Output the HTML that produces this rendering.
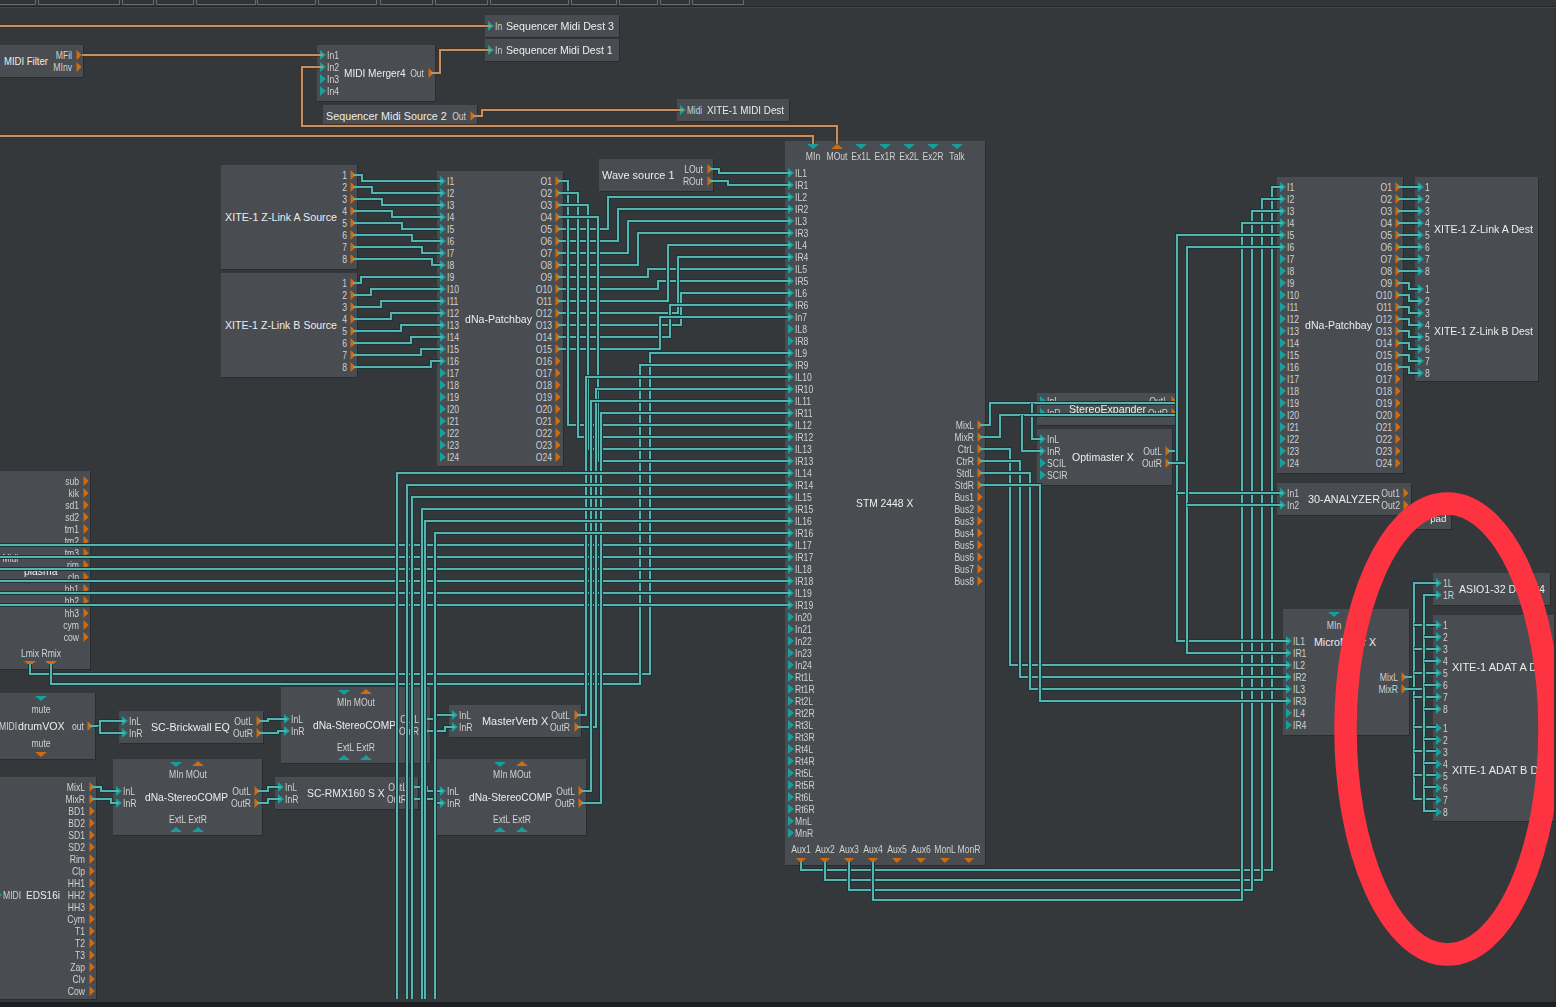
<!DOCTYPE html>
<html><head><meta charset="utf-8"><style>
html,body{margin:0;padding:0;background:#35383b;overflow:hidden;}
svg{display:block;font-family:"Liberation Sans",sans-serif;}
text{-webkit-font-smoothing:antialiased;}
</style></head><body>
<svg width="1556" height="1007" viewBox="0 0 1556 1007">
<rect x="0" y="0" width="1556" height="1007" fill="#35383b"/>
<rect x="0" y="0" width="1556" height="6" fill="#323538"/>
<path d="M0,4.5 H35.5 V0" fill="none" stroke="#6a6d70" stroke-width="1"/><path d="M38.5,0 V4.5 H119.5 V0" fill="none" stroke="#6a6d70" stroke-width="1"/><path d="M122.5,0 V4.5 H153.5 V0" fill="none" stroke="#6a6d70" stroke-width="1"/><path d="M156.5,0 V4.5 H193.5 V0" fill="none" stroke="#6a6d70" stroke-width="1"/><path d="M196.5,0 V4.5 H255.5 V0" fill="none" stroke="#6a6d70" stroke-width="1"/><path d="M257.5,0 V4.5 H315.5 V0" fill="none" stroke="#6a6d70" stroke-width="1"/><path d="M318.5,0 V4.5 H376.5 V0" fill="none" stroke="#6a6d70" stroke-width="1"/><path d="M380.5,0 V4.5 H432.5 V0" fill="none" stroke="#6a6d70" stroke-width="1"/><path d="M435.5,0 V4.5 H487.5 V0" fill="none" stroke="#6a6d70" stroke-width="1"/><path d="M490.5,0 V4.5 H568.5 V0" fill="none" stroke="#6a6d70" stroke-width="1"/><path d="M571.5,0 V4.5 H616.5 V0" fill="none" stroke="#6a6d70" stroke-width="1"/><path d="M619.5,0 V4.5 H657.5 V0" fill="none" stroke="#6a6d70" stroke-width="1"/><path d="M660.5,0 V4.5 H689.5 V0" fill="none" stroke="#6a6d70" stroke-width="1"/><path d="M692.5,0 V4.5 H743.5 V0" fill="none" stroke="#6a6d70" stroke-width="1"/>
<rect x="0" y="6" width="1556" height="1" fill="#232527"/>
<rect x="0" y="7" width="1556" height="1" fill="#44474a"/>
<g opacity="0.999">
<rect x="-4" y="46" width="88" height="32" fill="#2a2c2f" shape-rendering="crispEdges"/><rect x="-5" y="45" width="88" height="32" fill="#4a4d51" shape-rendering="crispEdges"/><text x="4" y="65" font-size="11" text-anchor="start" fill="#eeeeee" textLength="44" lengthAdjust="spacingAndGlyphs">MIDI Filter</text><text transform="translate(72,59) scale(0.82,1)" font-size="10.5" text-anchor="end" fill="#d2d2d2">MFil</text><polygon points="76.5,50 81.7,55 76.5,60" fill="#d06c12"/><text transform="translate(72,71) scale(0.82,1)" font-size="10.5" text-anchor="end" fill="#d2d2d2">MInv</text><polygon points="76.5,62 81.7,67 76.5,72" fill="#d06c12"/><rect x="486" y="16" width="134" height="22" fill="#2a2c2f" shape-rendering="crispEdges"/><rect x="485" y="15" width="134" height="22" fill="#4a4d51" shape-rendering="crispEdges"/><polygon points="488,21 494,26 488,31" fill="#1a9e9e"/><text transform="translate(495,30) scale(0.82,1)" font-size="10.5" text-anchor="start" fill="#d2d2d2">In</text><text x="506" y="30" font-size="11" text-anchor="start" fill="#eeeeee" textLength="108" lengthAdjust="spacingAndGlyphs">Sequencer Midi Dest 3</text><rect x="486" y="40" width="134" height="22" fill="#2a2c2f" shape-rendering="crispEdges"/><rect x="485" y="39" width="134" height="22" fill="#4a4d51" shape-rendering="crispEdges"/><polygon points="488,45 494,50 488,55" fill="#1a9e9e"/><text transform="translate(495,54) scale(0.82,1)" font-size="10.5" text-anchor="start" fill="#d2d2d2">In</text><text x="506" y="54" font-size="11" text-anchor="start" fill="#eeeeee" textLength="106.7" lengthAdjust="spacingAndGlyphs">Sequencer Midi Dest 1</text><rect x="318" y="46" width="118" height="56" fill="#2a2c2f" shape-rendering="crispEdges"/><rect x="317" y="45" width="118" height="56" fill="#4a4d51" shape-rendering="crispEdges"/><polygon points="320,50 326,55 320,60" fill="#1a9e9e"/><text transform="translate(327,59) scale(0.82,1)" font-size="10.5" text-anchor="start" fill="#d2d2d2">In1</text><polygon points="320,62 326,67 320,72" fill="#1a9e9e"/><text transform="translate(327,71) scale(0.82,1)" font-size="10.5" text-anchor="start" fill="#d2d2d2">In2</text><polygon points="320,74 326,79 320,84" fill="#1a9e9e"/><text transform="translate(327,83) scale(0.82,1)" font-size="10.5" text-anchor="start" fill="#d2d2d2">In3</text><polygon points="320,86 326,91 320,96" fill="#1a9e9e"/><text transform="translate(327,95) scale(0.82,1)" font-size="10.5" text-anchor="start" fill="#d2d2d2">In4</text><text x="344" y="77" font-size="11" text-anchor="start" fill="#eeeeee" textLength="61.7" lengthAdjust="spacingAndGlyphs">MIDI Merger4</text><text transform="translate(424,77) scale(0.82,1)" font-size="10.5" text-anchor="end" fill="#d2d2d2">Out</text><polygon points="428.5,68 433.7,73 428.5,78" fill="#d06c12"/><rect x="324" y="106" width="154" height="20" fill="#2a2c2f" shape-rendering="crispEdges"/><rect x="323" y="105" width="154" height="20" fill="#4a4d51" shape-rendering="crispEdges"/><text x="326" y="120" font-size="11" text-anchor="start" fill="#eeeeee" textLength="120.8" lengthAdjust="spacingAndGlyphs">Sequencer Midi Source 2</text><text transform="translate(466,120) scale(0.82,1)" font-size="10.5" text-anchor="end" fill="#d2d2d2">Out</text><polygon points="470.5,111 475.7,116 470.5,121" fill="#d06c12"/><rect x="678" y="100" width="112" height="22" fill="#2a2c2f" shape-rendering="crispEdges"/><rect x="677" y="99" width="112" height="22" fill="#4a4d51" shape-rendering="crispEdges"/><polygon points="680,105 686,110 680,115" fill="#1a9e9e"/><text transform="translate(687,114) scale(0.82,1)" font-size="10" text-anchor="start" fill="#d2d2d2">Midi</text><text x="707" y="114" font-size="11" text-anchor="start" fill="#eeeeee" textLength="77" lengthAdjust="spacingAndGlyphs">XITE-1 MIDI Dest</text><rect x="600" y="160" width="114" height="32" fill="#2a2c2f" shape-rendering="crispEdges"/><rect x="599" y="159" width="114" height="32" fill="#4a4d51" shape-rendering="crispEdges"/><text x="602" y="179" font-size="11" text-anchor="start" fill="#eeeeee" textLength="72.6" lengthAdjust="spacingAndGlyphs">Wave source 1</text><text transform="translate(703,173) scale(0.82,1)" font-size="10.5" text-anchor="end" fill="#d2d2d2">LOut</text><polygon points="707.5,164 712.7,169 707.5,174" fill="#d06c12"/><text transform="translate(703,185) scale(0.82,1)" font-size="10.5" text-anchor="end" fill="#d2d2d2">ROut</text><polygon points="707.5,176 712.7,181 707.5,186" fill="#d06c12"/><rect x="222" y="166" width="136" height="104" fill="#2a2c2f" shape-rendering="crispEdges"/><rect x="221" y="165" width="136" height="104" fill="#4a4d51" shape-rendering="crispEdges"/><text x="225" y="221" font-size="11" text-anchor="start" fill="#eeeeee" textLength="112" lengthAdjust="spacingAndGlyphs">XITE-1  Z-Link A Source</text><text transform="translate(347,179) scale(0.82,1)" font-size="10.5" text-anchor="end" fill="#d2d2d2">1</text><polygon points="350.5,170 355.7,175 350.5,180" fill="#d06c12"/><text transform="translate(347,191) scale(0.82,1)" font-size="10.5" text-anchor="end" fill="#d2d2d2">2</text><polygon points="350.5,182 355.7,187 350.5,192" fill="#d06c12"/><text transform="translate(347,203) scale(0.82,1)" font-size="10.5" text-anchor="end" fill="#d2d2d2">3</text><polygon points="350.5,194 355.7,199 350.5,204" fill="#d06c12"/><text transform="translate(347,215) scale(0.82,1)" font-size="10.5" text-anchor="end" fill="#d2d2d2">4</text><polygon points="350.5,206 355.7,211 350.5,216" fill="#d06c12"/><text transform="translate(347,227) scale(0.82,1)" font-size="10.5" text-anchor="end" fill="#d2d2d2">5</text><polygon points="350.5,218 355.7,223 350.5,228" fill="#d06c12"/><text transform="translate(347,239) scale(0.82,1)" font-size="10.5" text-anchor="end" fill="#d2d2d2">6</text><polygon points="350.5,230 355.7,235 350.5,240" fill="#d06c12"/><text transform="translate(347,251) scale(0.82,1)" font-size="10.5" text-anchor="end" fill="#d2d2d2">7</text><polygon points="350.5,242 355.7,247 350.5,252" fill="#d06c12"/><text transform="translate(347,263) scale(0.82,1)" font-size="10.5" text-anchor="end" fill="#d2d2d2">8</text><polygon points="350.5,254 355.7,259 350.5,264" fill="#d06c12"/><rect x="222" y="274" width="136" height="104" fill="#2a2c2f" shape-rendering="crispEdges"/><rect x="221" y="273" width="136" height="104" fill="#4a4d51" shape-rendering="crispEdges"/><text x="225" y="329" font-size="11" text-anchor="start" fill="#eeeeee" textLength="112" lengthAdjust="spacingAndGlyphs">XITE-1  Z-Link B Source</text><text transform="translate(347,287) scale(0.82,1)" font-size="10.5" text-anchor="end" fill="#d2d2d2">1</text><polygon points="350.5,278 355.7,283 350.5,288" fill="#d06c12"/><text transform="translate(347,299) scale(0.82,1)" font-size="10.5" text-anchor="end" fill="#d2d2d2">2</text><polygon points="350.5,290 355.7,295 350.5,300" fill="#d06c12"/><text transform="translate(347,311) scale(0.82,1)" font-size="10.5" text-anchor="end" fill="#d2d2d2">3</text><polygon points="350.5,302 355.7,307 350.5,312" fill="#d06c12"/><text transform="translate(347,323) scale(0.82,1)" font-size="10.5" text-anchor="end" fill="#d2d2d2">4</text><polygon points="350.5,314 355.7,319 350.5,324" fill="#d06c12"/><text transform="translate(347,335) scale(0.82,1)" font-size="10.5" text-anchor="end" fill="#d2d2d2">5</text><polygon points="350.5,326 355.7,331 350.5,336" fill="#d06c12"/><text transform="translate(347,347) scale(0.82,1)" font-size="10.5" text-anchor="end" fill="#d2d2d2">6</text><polygon points="350.5,338 355.7,343 350.5,348" fill="#d06c12"/><text transform="translate(347,359) scale(0.82,1)" font-size="10.5" text-anchor="end" fill="#d2d2d2">7</text><polygon points="350.5,350 355.7,355 350.5,360" fill="#d06c12"/><text transform="translate(347,371) scale(0.82,1)" font-size="10.5" text-anchor="end" fill="#d2d2d2">8</text><polygon points="350.5,362 355.7,367 350.5,372" fill="#d06c12"/><rect x="438" y="172" width="126" height="295" fill="#2a2c2f" shape-rendering="crispEdges"/><rect x="437" y="171" width="126" height="295" fill="#4a4d51" shape-rendering="crispEdges"/><polygon points="440,176 446,181 440,186" fill="#1a9e9e"/><text transform="translate(447,185) scale(0.82,1)" font-size="10.5" text-anchor="start" fill="#d2d2d2">I1</text><text transform="translate(552,185) scale(0.82,1)" font-size="10.5" text-anchor="end" fill="#d2d2d2">O1</text><polygon points="555.5,176 560.7,181 555.5,186" fill="#d06c12"/><polygon points="440,188 446,193 440,198" fill="#1a9e9e"/><text transform="translate(447,197) scale(0.82,1)" font-size="10.5" text-anchor="start" fill="#d2d2d2">I2</text><text transform="translate(552,197) scale(0.82,1)" font-size="10.5" text-anchor="end" fill="#d2d2d2">O2</text><polygon points="555.5,188 560.7,193 555.5,198" fill="#d06c12"/><polygon points="440,200 446,205 440,210" fill="#1a9e9e"/><text transform="translate(447,209) scale(0.82,1)" font-size="10.5" text-anchor="start" fill="#d2d2d2">I3</text><text transform="translate(552,209) scale(0.82,1)" font-size="10.5" text-anchor="end" fill="#d2d2d2">O3</text><polygon points="555.5,200 560.7,205 555.5,210" fill="#d06c12"/><polygon points="440,212 446,217 440,222" fill="#1a9e9e"/><text transform="translate(447,221) scale(0.82,1)" font-size="10.5" text-anchor="start" fill="#d2d2d2">I4</text><text transform="translate(552,221) scale(0.82,1)" font-size="10.5" text-anchor="end" fill="#d2d2d2">O4</text><polygon points="555.5,212 560.7,217 555.5,222" fill="#d06c12"/><polygon points="440,224 446,229 440,234" fill="#1a9e9e"/><text transform="translate(447,233) scale(0.82,1)" font-size="10.5" text-anchor="start" fill="#d2d2d2">I5</text><text transform="translate(552,233) scale(0.82,1)" font-size="10.5" text-anchor="end" fill="#d2d2d2">O5</text><polygon points="555.5,224 560.7,229 555.5,234" fill="#d06c12"/><polygon points="440,236 446,241 440,246" fill="#1a9e9e"/><text transform="translate(447,245) scale(0.82,1)" font-size="10.5" text-anchor="start" fill="#d2d2d2">I6</text><text transform="translate(552,245) scale(0.82,1)" font-size="10.5" text-anchor="end" fill="#d2d2d2">O6</text><polygon points="555.5,236 560.7,241 555.5,246" fill="#d06c12"/><polygon points="440,248 446,253 440,258" fill="#1a9e9e"/><text transform="translate(447,257) scale(0.82,1)" font-size="10.5" text-anchor="start" fill="#d2d2d2">I7</text><text transform="translate(552,257) scale(0.82,1)" font-size="10.5" text-anchor="end" fill="#d2d2d2">O7</text><polygon points="555.5,248 560.7,253 555.5,258" fill="#d06c12"/><polygon points="440,260 446,265 440,270" fill="#1a9e9e"/><text transform="translate(447,269) scale(0.82,1)" font-size="10.5" text-anchor="start" fill="#d2d2d2">I8</text><text transform="translate(552,269) scale(0.82,1)" font-size="10.5" text-anchor="end" fill="#d2d2d2">O8</text><polygon points="555.5,260 560.7,265 555.5,270" fill="#d06c12"/><polygon points="440,272 446,277 440,282" fill="#1a9e9e"/><text transform="translate(447,281) scale(0.82,1)" font-size="10.5" text-anchor="start" fill="#d2d2d2">I9</text><text transform="translate(552,281) scale(0.82,1)" font-size="10.5" text-anchor="end" fill="#d2d2d2">O9</text><polygon points="555.5,272 560.7,277 555.5,282" fill="#d06c12"/><polygon points="440,284 446,289 440,294" fill="#1a9e9e"/><text transform="translate(447,293) scale(0.82,1)" font-size="10.5" text-anchor="start" fill="#d2d2d2">I10</text><text transform="translate(552,293) scale(0.82,1)" font-size="10.5" text-anchor="end" fill="#d2d2d2">O10</text><polygon points="555.5,284 560.7,289 555.5,294" fill="#d06c12"/><polygon points="440,296 446,301 440,306" fill="#1a9e9e"/><text transform="translate(447,305) scale(0.82,1)" font-size="10.5" text-anchor="start" fill="#d2d2d2">I11</text><text transform="translate(552,305) scale(0.82,1)" font-size="10.5" text-anchor="end" fill="#d2d2d2">O11</text><polygon points="555.5,296 560.7,301 555.5,306" fill="#d06c12"/><polygon points="440,308 446,313 440,318" fill="#1a9e9e"/><text transform="translate(447,317) scale(0.82,1)" font-size="10.5" text-anchor="start" fill="#d2d2d2">I12</text><text transform="translate(552,317) scale(0.82,1)" font-size="10.5" text-anchor="end" fill="#d2d2d2">O12</text><polygon points="555.5,308 560.7,313 555.5,318" fill="#d06c12"/><polygon points="440,320 446,325 440,330" fill="#1a9e9e"/><text transform="translate(447,329) scale(0.82,1)" font-size="10.5" text-anchor="start" fill="#d2d2d2">I13</text><text transform="translate(552,329) scale(0.82,1)" font-size="10.5" text-anchor="end" fill="#d2d2d2">O13</text><polygon points="555.5,320 560.7,325 555.5,330" fill="#d06c12"/><polygon points="440,332 446,337 440,342" fill="#1a9e9e"/><text transform="translate(447,341) scale(0.82,1)" font-size="10.5" text-anchor="start" fill="#d2d2d2">I14</text><text transform="translate(552,341) scale(0.82,1)" font-size="10.5" text-anchor="end" fill="#d2d2d2">O14</text><polygon points="555.5,332 560.7,337 555.5,342" fill="#d06c12"/><polygon points="440,344 446,349 440,354" fill="#1a9e9e"/><text transform="translate(447,353) scale(0.82,1)" font-size="10.5" text-anchor="start" fill="#d2d2d2">I15</text><text transform="translate(552,353) scale(0.82,1)" font-size="10.5" text-anchor="end" fill="#d2d2d2">O15</text><polygon points="555.5,344 560.7,349 555.5,354" fill="#d06c12"/><polygon points="440,356 446,361 440,366" fill="#1a9e9e"/><text transform="translate(447,365) scale(0.82,1)" font-size="10.5" text-anchor="start" fill="#d2d2d2">I16</text><text transform="translate(552,365) scale(0.82,1)" font-size="10.5" text-anchor="end" fill="#d2d2d2">O16</text><polygon points="555.5,356 560.7,361 555.5,366" fill="#d06c12"/><polygon points="440,368 446,373 440,378" fill="#1a9e9e"/><text transform="translate(447,377) scale(0.82,1)" font-size="10.5" text-anchor="start" fill="#d2d2d2">I17</text><text transform="translate(552,377) scale(0.82,1)" font-size="10.5" text-anchor="end" fill="#d2d2d2">O17</text><polygon points="555.5,368 560.7,373 555.5,378" fill="#d06c12"/><polygon points="440,380 446,385 440,390" fill="#1a9e9e"/><text transform="translate(447,389) scale(0.82,1)" font-size="10.5" text-anchor="start" fill="#d2d2d2">I18</text><text transform="translate(552,389) scale(0.82,1)" font-size="10.5" text-anchor="end" fill="#d2d2d2">O18</text><polygon points="555.5,380 560.7,385 555.5,390" fill="#d06c12"/><polygon points="440,392 446,397 440,402" fill="#1a9e9e"/><text transform="translate(447,401) scale(0.82,1)" font-size="10.5" text-anchor="start" fill="#d2d2d2">I19</text><text transform="translate(552,401) scale(0.82,1)" font-size="10.5" text-anchor="end" fill="#d2d2d2">O19</text><polygon points="555.5,392 560.7,397 555.5,402" fill="#d06c12"/><polygon points="440,404 446,409 440,414" fill="#1a9e9e"/><text transform="translate(447,413) scale(0.82,1)" font-size="10.5" text-anchor="start" fill="#d2d2d2">I20</text><text transform="translate(552,413) scale(0.82,1)" font-size="10.5" text-anchor="end" fill="#d2d2d2">O20</text><polygon points="555.5,404 560.7,409 555.5,414" fill="#d06c12"/><polygon points="440,416 446,421 440,426" fill="#1a9e9e"/><text transform="translate(447,425) scale(0.82,1)" font-size="10.5" text-anchor="start" fill="#d2d2d2">I21</text><text transform="translate(552,425) scale(0.82,1)" font-size="10.5" text-anchor="end" fill="#d2d2d2">O21</text><polygon points="555.5,416 560.7,421 555.5,426" fill="#d06c12"/><polygon points="440,428 446,433 440,438" fill="#1a9e9e"/><text transform="translate(447,437) scale(0.82,1)" font-size="10.5" text-anchor="start" fill="#d2d2d2">I22</text><text transform="translate(552,437) scale(0.82,1)" font-size="10.5" text-anchor="end" fill="#d2d2d2">O22</text><polygon points="555.5,428 560.7,433 555.5,438" fill="#d06c12"/><polygon points="440,440 446,445 440,450" fill="#1a9e9e"/><text transform="translate(447,449) scale(0.82,1)" font-size="10.5" text-anchor="start" fill="#d2d2d2">I23</text><text transform="translate(552,449) scale(0.82,1)" font-size="10.5" text-anchor="end" fill="#d2d2d2">O23</text><polygon points="555.5,440 560.7,445 555.5,450" fill="#d06c12"/><polygon points="440,452 446,457 440,462" fill="#1a9e9e"/><text transform="translate(447,461) scale(0.82,1)" font-size="10.5" text-anchor="start" fill="#d2d2d2">I24</text><text transform="translate(552,461) scale(0.82,1)" font-size="10.5" text-anchor="end" fill="#d2d2d2">O24</text><polygon points="555.5,452 560.7,457 555.5,462" fill="#d06c12"/><text x="465" y="323" font-size="11" text-anchor="start" fill="#eeeeee" textLength="67" lengthAdjust="spacingAndGlyphs">dNa-Patchbay</text><rect x="786" y="142" width="200" height="724" fill="#2a2c2f" shape-rendering="crispEdges"/><rect x="785" y="141" width="200" height="724" fill="#4a4d51" shape-rendering="crispEdges"/><polygon points="807,144 819,144 813,149" fill="#1a9e9e"/><text transform="translate(813,160) scale(0.82,1)" font-size="10.5" text-anchor="middle" fill="#d2d2d2">MIn</text><polygon points="831,149 843,149 837,144" fill="#d06c12"/><text transform="translate(837,160) scale(0.82,1)" font-size="10.5" text-anchor="middle" fill="#d2d2d2">MOut</text><polygon points="855,144 867,144 861,149" fill="#1a9e9e"/><text transform="translate(861,160) scale(0.82,1)" font-size="10.5" text-anchor="middle" fill="#d2d2d2">Ex1L</text><polygon points="879,144 891,144 885,149" fill="#1a9e9e"/><text transform="translate(885,160) scale(0.82,1)" font-size="10.5" text-anchor="middle" fill="#d2d2d2">Ex1R</text><polygon points="903,144 915,144 909,149" fill="#1a9e9e"/><text transform="translate(909,160) scale(0.82,1)" font-size="10.5" text-anchor="middle" fill="#d2d2d2">Ex2L</text><polygon points="927,144 939,144 933,149" fill="#1a9e9e"/><text transform="translate(933,160) scale(0.82,1)" font-size="10.5" text-anchor="middle" fill="#d2d2d2">Ex2R</text><polygon points="951,144 963,144 957,149" fill="#1a9e9e"/><text transform="translate(957,160) scale(0.82,1)" font-size="10.5" text-anchor="middle" fill="#d2d2d2">Talk</text><polygon points="788,168 794,173 788,178" fill="#1a9e9e"/><text transform="translate(795,177) scale(0.82,1)" font-size="10.5" text-anchor="start" fill="#d2d2d2">IL1</text><polygon points="788,180 794,185 788,190" fill="#1a9e9e"/><text transform="translate(795,189) scale(0.82,1)" font-size="10.5" text-anchor="start" fill="#d2d2d2">IR1</text><polygon points="788,192 794,197 788,202" fill="#1a9e9e"/><text transform="translate(795,201) scale(0.82,1)" font-size="10.5" text-anchor="start" fill="#d2d2d2">IL2</text><polygon points="788,204 794,209 788,214" fill="#1a9e9e"/><text transform="translate(795,213) scale(0.82,1)" font-size="10.5" text-anchor="start" fill="#d2d2d2">IR2</text><polygon points="788,216 794,221 788,226" fill="#1a9e9e"/><text transform="translate(795,225) scale(0.82,1)" font-size="10.5" text-anchor="start" fill="#d2d2d2">IL3</text><polygon points="788,228 794,233 788,238" fill="#1a9e9e"/><text transform="translate(795,237) scale(0.82,1)" font-size="10.5" text-anchor="start" fill="#d2d2d2">IR3</text><polygon points="788,240 794,245 788,250" fill="#1a9e9e"/><text transform="translate(795,249) scale(0.82,1)" font-size="10.5" text-anchor="start" fill="#d2d2d2">IL4</text><polygon points="788,252 794,257 788,262" fill="#1a9e9e"/><text transform="translate(795,261) scale(0.82,1)" font-size="10.5" text-anchor="start" fill="#d2d2d2">IR4</text><polygon points="788,264 794,269 788,274" fill="#1a9e9e"/><text transform="translate(795,273) scale(0.82,1)" font-size="10.5" text-anchor="start" fill="#d2d2d2">IL5</text><polygon points="788,276 794,281 788,286" fill="#1a9e9e"/><text transform="translate(795,285) scale(0.82,1)" font-size="10.5" text-anchor="start" fill="#d2d2d2">IR5</text><polygon points="788,288 794,293 788,298" fill="#1a9e9e"/><text transform="translate(795,297) scale(0.82,1)" font-size="10.5" text-anchor="start" fill="#d2d2d2">IL6</text><polygon points="788,300 794,305 788,310" fill="#1a9e9e"/><text transform="translate(795,309) scale(0.82,1)" font-size="10.5" text-anchor="start" fill="#d2d2d2">IR6</text><polygon points="788,312 794,317 788,322" fill="#1a9e9e"/><text transform="translate(795,321) scale(0.82,1)" font-size="10.5" text-anchor="start" fill="#d2d2d2">In7</text><polygon points="788,324 794,329 788,334" fill="#1a9e9e"/><text transform="translate(795,333) scale(0.82,1)" font-size="10.5" text-anchor="start" fill="#d2d2d2">IL8</text><polygon points="788,336 794,341 788,346" fill="#1a9e9e"/><text transform="translate(795,345) scale(0.82,1)" font-size="10.5" text-anchor="start" fill="#d2d2d2">IR8</text><polygon points="788,348 794,353 788,358" fill="#1a9e9e"/><text transform="translate(795,357) scale(0.82,1)" font-size="10.5" text-anchor="start" fill="#d2d2d2">IL9</text><polygon points="788,360 794,365 788,370" fill="#1a9e9e"/><text transform="translate(795,369) scale(0.82,1)" font-size="10.5" text-anchor="start" fill="#d2d2d2">IR9</text><polygon points="788,372 794,377 788,382" fill="#1a9e9e"/><text transform="translate(795,381) scale(0.82,1)" font-size="10.5" text-anchor="start" fill="#d2d2d2">IL10</text><polygon points="788,384 794,389 788,394" fill="#1a9e9e"/><text transform="translate(795,393) scale(0.82,1)" font-size="10.5" text-anchor="start" fill="#d2d2d2">IR10</text><polygon points="788,396 794,401 788,406" fill="#1a9e9e"/><text transform="translate(795,405) scale(0.82,1)" font-size="10.5" text-anchor="start" fill="#d2d2d2">IL11</text><polygon points="788,408 794,413 788,418" fill="#1a9e9e"/><text transform="translate(795,417) scale(0.82,1)" font-size="10.5" text-anchor="start" fill="#d2d2d2">IR11</text><polygon points="788,420 794,425 788,430" fill="#1a9e9e"/><text transform="translate(795,429) scale(0.82,1)" font-size="10.5" text-anchor="start" fill="#d2d2d2">IL12</text><polygon points="788,432 794,437 788,442" fill="#1a9e9e"/><text transform="translate(795,441) scale(0.82,1)" font-size="10.5" text-anchor="start" fill="#d2d2d2">IR12</text><polygon points="788,444 794,449 788,454" fill="#1a9e9e"/><text transform="translate(795,453) scale(0.82,1)" font-size="10.5" text-anchor="start" fill="#d2d2d2">IL13</text><polygon points="788,456 794,461 788,466" fill="#1a9e9e"/><text transform="translate(795,465) scale(0.82,1)" font-size="10.5" text-anchor="start" fill="#d2d2d2">IR13</text><polygon points="788,468 794,473 788,478" fill="#1a9e9e"/><text transform="translate(795,477) scale(0.82,1)" font-size="10.5" text-anchor="start" fill="#d2d2d2">IL14</text><polygon points="788,480 794,485 788,490" fill="#1a9e9e"/><text transform="translate(795,489) scale(0.82,1)" font-size="10.5" text-anchor="start" fill="#d2d2d2">IR14</text><polygon points="788,492 794,497 788,502" fill="#1a9e9e"/><text transform="translate(795,501) scale(0.82,1)" font-size="10.5" text-anchor="start" fill="#d2d2d2">IL15</text><polygon points="788,504 794,509 788,514" fill="#1a9e9e"/><text transform="translate(795,513) scale(0.82,1)" font-size="10.5" text-anchor="start" fill="#d2d2d2">IR15</text><polygon points="788,516 794,521 788,526" fill="#1a9e9e"/><text transform="translate(795,525) scale(0.82,1)" font-size="10.5" text-anchor="start" fill="#d2d2d2">IL16</text><polygon points="788,528 794,533 788,538" fill="#1a9e9e"/><text transform="translate(795,537) scale(0.82,1)" font-size="10.5" text-anchor="start" fill="#d2d2d2">IR16</text><polygon points="788,540 794,545 788,550" fill="#1a9e9e"/><text transform="translate(795,549) scale(0.82,1)" font-size="10.5" text-anchor="start" fill="#d2d2d2">IL17</text><polygon points="788,552 794,557 788,562" fill="#1a9e9e"/><text transform="translate(795,561) scale(0.82,1)" font-size="10.5" text-anchor="start" fill="#d2d2d2">IR17</text><polygon points="788,564 794,569 788,574" fill="#1a9e9e"/><text transform="translate(795,573) scale(0.82,1)" font-size="10.5" text-anchor="start" fill="#d2d2d2">IL18</text><polygon points="788,576 794,581 788,586" fill="#1a9e9e"/><text transform="translate(795,585) scale(0.82,1)" font-size="10.5" text-anchor="start" fill="#d2d2d2">IR18</text><polygon points="788,588 794,593 788,598" fill="#1a9e9e"/><text transform="translate(795,597) scale(0.82,1)" font-size="10.5" text-anchor="start" fill="#d2d2d2">IL19</text><polygon points="788,600 794,605 788,610" fill="#1a9e9e"/><text transform="translate(795,609) scale(0.82,1)" font-size="10.5" text-anchor="start" fill="#d2d2d2">IR19</text><polygon points="788,612 794,617 788,622" fill="#1a9e9e"/><text transform="translate(795,621) scale(0.82,1)" font-size="10.5" text-anchor="start" fill="#d2d2d2">In20</text><polygon points="788,624 794,629 788,634" fill="#1a9e9e"/><text transform="translate(795,633) scale(0.82,1)" font-size="10.5" text-anchor="start" fill="#d2d2d2">In21</text><polygon points="788,636 794,641 788,646" fill="#1a9e9e"/><text transform="translate(795,645) scale(0.82,1)" font-size="10.5" text-anchor="start" fill="#d2d2d2">In22</text><polygon points="788,648 794,653 788,658" fill="#1a9e9e"/><text transform="translate(795,657) scale(0.82,1)" font-size="10.5" text-anchor="start" fill="#d2d2d2">In23</text><polygon points="788,660 794,665 788,670" fill="#1a9e9e"/><text transform="translate(795,669) scale(0.82,1)" font-size="10.5" text-anchor="start" fill="#d2d2d2">In24</text><polygon points="788,672 794,677 788,682" fill="#1a9e9e"/><text transform="translate(795,681) scale(0.82,1)" font-size="10.5" text-anchor="start" fill="#d2d2d2">Rt1L</text><polygon points="788,684 794,689 788,694" fill="#1a9e9e"/><text transform="translate(795,693) scale(0.82,1)" font-size="10.5" text-anchor="start" fill="#d2d2d2">Rt1R</text><polygon points="788,696 794,701 788,706" fill="#1a9e9e"/><text transform="translate(795,705) scale(0.82,1)" font-size="10.5" text-anchor="start" fill="#d2d2d2">Rt2L</text><polygon points="788,708 794,713 788,718" fill="#1a9e9e"/><text transform="translate(795,717) scale(0.82,1)" font-size="10.5" text-anchor="start" fill="#d2d2d2">Rt2R</text><polygon points="788,720 794,725 788,730" fill="#1a9e9e"/><text transform="translate(795,729) scale(0.82,1)" font-size="10.5" text-anchor="start" fill="#d2d2d2">Rt3L</text><polygon points="788,732 794,737 788,742" fill="#1a9e9e"/><text transform="translate(795,741) scale(0.82,1)" font-size="10.5" text-anchor="start" fill="#d2d2d2">Rt3R</text><polygon points="788,744 794,749 788,754" fill="#1a9e9e"/><text transform="translate(795,753) scale(0.82,1)" font-size="10.5" text-anchor="start" fill="#d2d2d2">Rt4L</text><polygon points="788,756 794,761 788,766" fill="#1a9e9e"/><text transform="translate(795,765) scale(0.82,1)" font-size="10.5" text-anchor="start" fill="#d2d2d2">Rt4R</text><polygon points="788,768 794,773 788,778" fill="#1a9e9e"/><text transform="translate(795,777) scale(0.82,1)" font-size="10.5" text-anchor="start" fill="#d2d2d2">Rt5L</text><polygon points="788,780 794,785 788,790" fill="#1a9e9e"/><text transform="translate(795,789) scale(0.82,1)" font-size="10.5" text-anchor="start" fill="#d2d2d2">Rt5R</text><polygon points="788,792 794,797 788,802" fill="#1a9e9e"/><text transform="translate(795,801) scale(0.82,1)" font-size="10.5" text-anchor="start" fill="#d2d2d2">Rt6L</text><polygon points="788,804 794,809 788,814" fill="#1a9e9e"/><text transform="translate(795,813) scale(0.82,1)" font-size="10.5" text-anchor="start" fill="#d2d2d2">Rt6R</text><polygon points="788,816 794,821 788,826" fill="#1a9e9e"/><text transform="translate(795,825) scale(0.82,1)" font-size="10.5" text-anchor="start" fill="#d2d2d2">MnL</text><polygon points="788,828 794,833 788,838" fill="#1a9e9e"/><text transform="translate(795,837) scale(0.82,1)" font-size="10.5" text-anchor="start" fill="#d2d2d2">MnR</text><text transform="translate(974,429) scale(0.82,1)" font-size="10.5" text-anchor="end" fill="#d2d2d2">MixL</text><polygon points="977.5,420 982.7,425 977.5,430" fill="#d06c12"/><text transform="translate(974,441) scale(0.82,1)" font-size="10.5" text-anchor="end" fill="#d2d2d2">MixR</text><polygon points="977.5,432 982.7,437 977.5,442" fill="#d06c12"/><text transform="translate(974,453) scale(0.82,1)" font-size="10.5" text-anchor="end" fill="#d2d2d2">CtrL</text><polygon points="977.5,444 982.7,449 977.5,454" fill="#d06c12"/><text transform="translate(974,465) scale(0.82,1)" font-size="10.5" text-anchor="end" fill="#d2d2d2">CtrR</text><polygon points="977.5,456 982.7,461 977.5,466" fill="#d06c12"/><text transform="translate(974,477) scale(0.82,1)" font-size="10.5" text-anchor="end" fill="#d2d2d2">StdL</text><polygon points="977.5,468 982.7,473 977.5,478" fill="#d06c12"/><text transform="translate(974,489) scale(0.82,1)" font-size="10.5" text-anchor="end" fill="#d2d2d2">StdR</text><polygon points="977.5,480 982.7,485 977.5,490" fill="#d06c12"/><text transform="translate(974,501) scale(0.82,1)" font-size="10.5" text-anchor="end" fill="#d2d2d2">Bus1</text><polygon points="977.5,492 982.7,497 977.5,502" fill="#d06c12"/><text transform="translate(974,513) scale(0.82,1)" font-size="10.5" text-anchor="end" fill="#d2d2d2">Bus2</text><polygon points="977.5,504 982.7,509 977.5,514" fill="#d06c12"/><text transform="translate(974,525) scale(0.82,1)" font-size="10.5" text-anchor="end" fill="#d2d2d2">Bus3</text><polygon points="977.5,516 982.7,521 977.5,526" fill="#d06c12"/><text transform="translate(974,537) scale(0.82,1)" font-size="10.5" text-anchor="end" fill="#d2d2d2">Bus4</text><polygon points="977.5,528 982.7,533 977.5,538" fill="#d06c12"/><text transform="translate(974,549) scale(0.82,1)" font-size="10.5" text-anchor="end" fill="#d2d2d2">Bus5</text><polygon points="977.5,540 982.7,545 977.5,550" fill="#d06c12"/><text transform="translate(974,561) scale(0.82,1)" font-size="10.5" text-anchor="end" fill="#d2d2d2">Bus6</text><polygon points="977.5,552 982.7,557 977.5,562" fill="#d06c12"/><text transform="translate(974,573) scale(0.82,1)" font-size="10.5" text-anchor="end" fill="#d2d2d2">Bus7</text><polygon points="977.5,564 982.7,569 977.5,574" fill="#d06c12"/><text transform="translate(974,585) scale(0.82,1)" font-size="10.5" text-anchor="end" fill="#d2d2d2">Bus8</text><polygon points="977.5,576 982.7,581 977.5,586" fill="#d06c12"/><text x="856" y="507" font-size="11" text-anchor="start" fill="#eeeeee" textLength="57.3" lengthAdjust="spacingAndGlyphs">STM 2448 X</text><text transform="translate(801,853) scale(0.82,1)" font-size="10.5" text-anchor="middle" fill="#d2d2d2">Aux1</text><polygon points="796,858 806,858 801,863" fill="#d06c12"/><text transform="translate(825,853) scale(0.82,1)" font-size="10.5" text-anchor="middle" fill="#d2d2d2">Aux2</text><polygon points="820,858 830,858 825,863" fill="#d06c12"/><text transform="translate(849,853) scale(0.82,1)" font-size="10.5" text-anchor="middle" fill="#d2d2d2">Aux3</text><polygon points="844,858 854,858 849,863" fill="#d06c12"/><text transform="translate(873,853) scale(0.82,1)" font-size="10.5" text-anchor="middle" fill="#d2d2d2">Aux4</text><polygon points="868,858 878,858 873,863" fill="#d06c12"/><text transform="translate(897,853) scale(0.82,1)" font-size="10.5" text-anchor="middle" fill="#d2d2d2">Aux5</text><polygon points="892,858 902,858 897,863" fill="#d06c12"/><text transform="translate(921,853) scale(0.82,1)" font-size="10.5" text-anchor="middle" fill="#d2d2d2">Aux6</text><polygon points="916,858 926,858 921,863" fill="#d06c12"/><text transform="translate(945,853) scale(0.82,1)" font-size="10.5" text-anchor="middle" fill="#d2d2d2">MonL</text><polygon points="940,858 950,858 945,863" fill="#d06c12"/><text transform="translate(969,853) scale(0.82,1)" font-size="10.5" text-anchor="middle" fill="#d2d2d2">MonR</text><polygon points="964,858 974,858 969,863" fill="#d06c12"/><rect x="-4" y="472" width="95" height="198" fill="#2a2c2f" shape-rendering="crispEdges"/><rect x="-5" y="471" width="95" height="198" fill="#4a4d51" shape-rendering="crispEdges"/><text transform="translate(79,485) scale(0.82,1)" font-size="10.5" text-anchor="end" fill="#d2d2d2">sub</text><polygon points="83.5,476 88.7,481 83.5,486" fill="#d06c12"/><text transform="translate(79,497) scale(0.82,1)" font-size="10.5" text-anchor="end" fill="#d2d2d2">kik</text><polygon points="83.5,488 88.7,493 83.5,498" fill="#d06c12"/><text transform="translate(79,509) scale(0.82,1)" font-size="10.5" text-anchor="end" fill="#d2d2d2">sd1</text><polygon points="83.5,500 88.7,505 83.5,510" fill="#d06c12"/><text transform="translate(79,521) scale(0.82,1)" font-size="10.5" text-anchor="end" fill="#d2d2d2">sd2</text><polygon points="83.5,512 88.7,517 83.5,522" fill="#d06c12"/><text transform="translate(79,533) scale(0.82,1)" font-size="10.5" text-anchor="end" fill="#d2d2d2">tm1</text><polygon points="83.5,524 88.7,529 83.5,534" fill="#d06c12"/><text transform="translate(79,545) scale(0.82,1)" font-size="10.5" text-anchor="end" fill="#d2d2d2">tm2</text><polygon points="83.5,536 88.7,541 83.5,546" fill="#d06c12"/><text transform="translate(79,557) scale(0.82,1)" font-size="10.5" text-anchor="end" fill="#d2d2d2">tm3</text><polygon points="83.5,548 88.7,553 83.5,558" fill="#d06c12"/><text transform="translate(79,569) scale(0.82,1)" font-size="10.5" text-anchor="end" fill="#d2d2d2">rim</text><polygon points="83.5,560 88.7,565 83.5,570" fill="#d06c12"/><text transform="translate(79,581) scale(0.82,1)" font-size="10.5" text-anchor="end" fill="#d2d2d2">clp</text><polygon points="83.5,572 88.7,577 83.5,582" fill="#d06c12"/><text transform="translate(79,593) scale(0.82,1)" font-size="10.5" text-anchor="end" fill="#d2d2d2">hh1</text><polygon points="83.5,584 88.7,589 83.5,594" fill="#d06c12"/><text transform="translate(79,605) scale(0.82,1)" font-size="10.5" text-anchor="end" fill="#d2d2d2">hh2</text><polygon points="83.5,596 88.7,601 83.5,606" fill="#d06c12"/><text transform="translate(79,617) scale(0.82,1)" font-size="10.5" text-anchor="end" fill="#d2d2d2">hh3</text><polygon points="83.5,608 88.7,613 83.5,618" fill="#d06c12"/><text transform="translate(79,629) scale(0.82,1)" font-size="10.5" text-anchor="end" fill="#d2d2d2">cym</text><polygon points="83.5,620 88.7,625 83.5,630" fill="#d06c12"/><text transform="translate(79,641) scale(0.82,1)" font-size="10.5" text-anchor="end" fill="#d2d2d2">cow</text><polygon points="83.5,632 88.7,637 83.5,642" fill="#d06c12"/><text transform="translate(2.5,562) scale(0.82,1)" font-size="10.5" text-anchor="start" fill="#d2d2d2">Midi</text><text x="24" y="575" font-size="11" text-anchor="start" fill="#eeeeee" textLength="33.4" lengthAdjust="spacingAndGlyphs">plasma</text><text transform="translate(41,657) scale(0.82,1)" font-size="10.5" text-anchor="middle" fill="#d2d2d2">Lmix Rmix</text><polygon points="24,661 36,661 30,666" fill="#d06c12"/><polygon points="45,661 57,661 51,666" fill="#d06c12"/><rect x="-4" y="694" width="100" height="66" fill="#2a2c2f" shape-rendering="crispEdges"/><rect x="-5" y="693" width="100" height="66" fill="#4a4d51" shape-rendering="crispEdges"/><polygon points="35,696 47,696 41,701" fill="#1a9e9e"/><text transform="translate(41,713) scale(0.82,1)" font-size="10.5" text-anchor="middle" fill="#d2d2d2">mute</text><text transform="translate(-1,730) scale(0.82,1)" font-size="10.5" text-anchor="start" fill="#d2d2d2">MIDI</text><text x="18" y="730" font-size="11" text-anchor="start" fill="#eeeeee" textLength="46.6" lengthAdjust="spacingAndGlyphs">drumVOX</text><text transform="translate(84,730) scale(0.82,1)" font-size="10.5" text-anchor="end" fill="#d2d2d2">out</text><polygon points="87.5,721 92.7,726 87.5,731" fill="#d06c12"/><text transform="translate(41,747) scale(0.82,1)" font-size="10.5" text-anchor="middle" fill="#d2d2d2">mute</text><polygon points="35,752 47,752 41,757" fill="#d06c12"/><rect x="120" y="712" width="144" height="32" fill="#2a2c2f" shape-rendering="crispEdges"/><rect x="119" y="711" width="144" height="32" fill="#4a4d51" shape-rendering="crispEdges"/><polygon points="122,716 128,721 122,726" fill="#1a9e9e"/><text transform="translate(129,725) scale(0.82,1)" font-size="10.5" text-anchor="start" fill="#d2d2d2">InL</text><polygon points="122,728 128,733 122,738" fill="#1a9e9e"/><text transform="translate(129,737) scale(0.82,1)" font-size="10.5" text-anchor="start" fill="#d2d2d2">InR</text><text x="151" y="731" font-size="11" text-anchor="start" fill="#eeeeee" textLength="78.9" lengthAdjust="spacingAndGlyphs">SC-Brickwall EQ</text><text transform="translate(253,725) scale(0.82,1)" font-size="10.5" text-anchor="end" fill="#d2d2d2">OutL</text><polygon points="256.5,716 261.7,721 256.5,726" fill="#d06c12"/><text transform="translate(253,737) scale(0.82,1)" font-size="10.5" text-anchor="end" fill="#d2d2d2">OutR</text><polygon points="256.5,728 261.7,733 256.5,738" fill="#d06c12"/><rect x="282" y="688" width="149" height="76" fill="#2a2c2f" shape-rendering="crispEdges"/><rect x="281" y="687" width="149" height="76" fill="#4a4d51" shape-rendering="crispEdges"/><polygon points="338,690 350,690 344,695" fill="#1a9e9e"/><polygon points="360,694 372,694 366,689" fill="#d06c12"/><text transform="translate(356,706) scale(0.82,1)" font-size="10.5" text-anchor="middle" fill="#d2d2d2">MIn MOut</text><polygon points="284,714 290,719 284,724" fill="#1a9e9e"/><text transform="translate(291,723) scale(0.82,1)" font-size="10.5" text-anchor="start" fill="#d2d2d2">InL</text><polygon points="284,726 290,731 284,736" fill="#1a9e9e"/><text transform="translate(291,735) scale(0.82,1)" font-size="10.5" text-anchor="start" fill="#d2d2d2">InR</text><text x="313" y="729" font-size="11" text-anchor="start" fill="#eeeeee" textLength="83" lengthAdjust="spacingAndGlyphs">dNa-StereoCOMP</text><text transform="translate(419,723) scale(0.82,1)" font-size="10.5" text-anchor="end" fill="#d2d2d2">OutL</text><polygon points="422.5,714 427.7,719 422.5,724" fill="#d06c12"/><text transform="translate(419,735) scale(0.82,1)" font-size="10.5" text-anchor="end" fill="#d2d2d2">OutR</text><polygon points="422.5,726 427.7,731 422.5,736" fill="#d06c12"/><text transform="translate(356,751) scale(0.82,1)" font-size="10.5" text-anchor="middle" fill="#d2d2d2">ExtL ExtR</text><polygon points="338,760 350,760 344,755" fill="#1a9e9e"/><polygon points="360,760 372,760 366,755" fill="#1a9e9e"/><rect x="114" y="760" width="149" height="76" fill="#2a2c2f" shape-rendering="crispEdges"/><rect x="113" y="759" width="149" height="76" fill="#4a4d51" shape-rendering="crispEdges"/><polygon points="170,762 182,762 176,767" fill="#1a9e9e"/><polygon points="192,766 204,766 198,761" fill="#d06c12"/><text transform="translate(188,778) scale(0.82,1)" font-size="10.5" text-anchor="middle" fill="#d2d2d2">MIn MOut</text><polygon points="116,786 122,791 116,796" fill="#1a9e9e"/><text transform="translate(123,795) scale(0.82,1)" font-size="10.5" text-anchor="start" fill="#d2d2d2">InL</text><polygon points="116,798 122,803 116,808" fill="#1a9e9e"/><text transform="translate(123,807) scale(0.82,1)" font-size="10.5" text-anchor="start" fill="#d2d2d2">InR</text><text x="145" y="801" font-size="11" text-anchor="start" fill="#eeeeee" textLength="83" lengthAdjust="spacingAndGlyphs">dNa-StereoCOMP</text><text transform="translate(251,795) scale(0.82,1)" font-size="10.5" text-anchor="end" fill="#d2d2d2">OutL</text><polygon points="254.5,786 259.7,791 254.5,796" fill="#d06c12"/><text transform="translate(251,807) scale(0.82,1)" font-size="10.5" text-anchor="end" fill="#d2d2d2">OutR</text><polygon points="254.5,798 259.7,803 254.5,808" fill="#d06c12"/><text transform="translate(188,823) scale(0.82,1)" font-size="10.5" text-anchor="middle" fill="#d2d2d2">ExtL ExtR</text><polygon points="170,832 182,832 176,827" fill="#1a9e9e"/><polygon points="192,832 204,832 198,827" fill="#1a9e9e"/><rect x="438" y="760" width="149" height="76" fill="#2a2c2f" shape-rendering="crispEdges"/><rect x="437" y="759" width="149" height="76" fill="#4a4d51" shape-rendering="crispEdges"/><polygon points="494,762 506,762 500,767" fill="#1a9e9e"/><polygon points="516,766 528,766 522,761" fill="#d06c12"/><text transform="translate(512,778) scale(0.82,1)" font-size="10.5" text-anchor="middle" fill="#d2d2d2">MIn MOut</text><polygon points="440,786 446,791 440,796" fill="#1a9e9e"/><text transform="translate(447,795) scale(0.82,1)" font-size="10.5" text-anchor="start" fill="#d2d2d2">InL</text><polygon points="440,798 446,803 440,808" fill="#1a9e9e"/><text transform="translate(447,807) scale(0.82,1)" font-size="10.5" text-anchor="start" fill="#d2d2d2">InR</text><text x="469" y="801" font-size="11" text-anchor="start" fill="#eeeeee" textLength="83" lengthAdjust="spacingAndGlyphs">dNa-StereoCOMP</text><text transform="translate(575,795) scale(0.82,1)" font-size="10.5" text-anchor="end" fill="#d2d2d2">OutL</text><polygon points="578.5,786 583.7,791 578.5,796" fill="#d06c12"/><text transform="translate(575,807) scale(0.82,1)" font-size="10.5" text-anchor="end" fill="#d2d2d2">OutR</text><polygon points="578.5,798 583.7,803 578.5,808" fill="#d06c12"/><text transform="translate(512,823) scale(0.82,1)" font-size="10.5" text-anchor="middle" fill="#d2d2d2">ExtL ExtR</text><polygon points="494,832 506,832 500,827" fill="#1a9e9e"/><polygon points="516,832 528,832 522,827" fill="#1a9e9e"/><rect x="450" y="706" width="132" height="32" fill="#2a2c2f" shape-rendering="crispEdges"/><rect x="449" y="705" width="132" height="32" fill="#4a4d51" shape-rendering="crispEdges"/><polygon points="452,710 458,715 452,720" fill="#1a9e9e"/><text transform="translate(459,719) scale(0.82,1)" font-size="10.5" text-anchor="start" fill="#d2d2d2">InL</text><polygon points="452,722 458,727 452,732" fill="#1a9e9e"/><text transform="translate(459,731) scale(0.82,1)" font-size="10.5" text-anchor="start" fill="#d2d2d2">InR</text><text x="482" y="725" font-size="11" text-anchor="start" fill="#eeeeee" textLength="66.3" lengthAdjust="spacingAndGlyphs">MasterVerb X</text><text transform="translate(570,719) scale(0.82,1)" font-size="10.5" text-anchor="end" fill="#d2d2d2">OutL</text><polygon points="574.5,710 579.7,715 574.5,720" fill="#d06c12"/><text transform="translate(570,731) scale(0.82,1)" font-size="10.5" text-anchor="end" fill="#d2d2d2">OutR</text><polygon points="574.5,722 579.7,727 574.5,732" fill="#d06c12"/><rect x="-4" y="778" width="101" height="222" fill="#2a2c2f" shape-rendering="crispEdges"/><rect x="-5" y="777" width="101" height="222" fill="#4a4d51" shape-rendering="crispEdges"/><text transform="translate(85,791) scale(0.82,1)" font-size="10.5" text-anchor="end" fill="#d2d2d2">MixL</text><polygon points="89.5,782 94.7,787 89.5,792" fill="#d06c12"/><text transform="translate(85,803) scale(0.82,1)" font-size="10.5" text-anchor="end" fill="#d2d2d2">MixR</text><polygon points="89.5,794 94.7,799 89.5,804" fill="#d06c12"/><text transform="translate(85,815) scale(0.82,1)" font-size="10.5" text-anchor="end" fill="#d2d2d2">BD1</text><polygon points="89.5,806 94.7,811 89.5,816" fill="#d06c12"/><text transform="translate(85,827) scale(0.82,1)" font-size="10.5" text-anchor="end" fill="#d2d2d2">BD2</text><polygon points="89.5,818 94.7,823 89.5,828" fill="#d06c12"/><text transform="translate(85,839) scale(0.82,1)" font-size="10.5" text-anchor="end" fill="#d2d2d2">SD1</text><polygon points="89.5,830 94.7,835 89.5,840" fill="#d06c12"/><text transform="translate(85,851) scale(0.82,1)" font-size="10.5" text-anchor="end" fill="#d2d2d2">SD2</text><polygon points="89.5,842 94.7,847 89.5,852" fill="#d06c12"/><text transform="translate(85,863) scale(0.82,1)" font-size="10.5" text-anchor="end" fill="#d2d2d2">Rim</text><polygon points="89.5,854 94.7,859 89.5,864" fill="#d06c12"/><text transform="translate(85,875) scale(0.82,1)" font-size="10.5" text-anchor="end" fill="#d2d2d2">Clp</text><polygon points="89.5,866 94.7,871 89.5,876" fill="#d06c12"/><text transform="translate(85,887) scale(0.82,1)" font-size="10.5" text-anchor="end" fill="#d2d2d2">HH1</text><polygon points="89.5,878 94.7,883 89.5,888" fill="#d06c12"/><text transform="translate(85,899) scale(0.82,1)" font-size="10.5" text-anchor="end" fill="#d2d2d2">HH2</text><polygon points="89.5,890 94.7,895 89.5,900" fill="#d06c12"/><text transform="translate(85,911) scale(0.82,1)" font-size="10.5" text-anchor="end" fill="#d2d2d2">HH3</text><polygon points="89.5,902 94.7,907 89.5,912" fill="#d06c12"/><text transform="translate(85,923) scale(0.82,1)" font-size="10.5" text-anchor="end" fill="#d2d2d2">Cym</text><polygon points="89.5,914 94.7,919 89.5,924" fill="#d06c12"/><text transform="translate(85,935) scale(0.82,1)" font-size="10.5" text-anchor="end" fill="#d2d2d2">T1</text><polygon points="89.5,926 94.7,931 89.5,936" fill="#d06c12"/><text transform="translate(85,947) scale(0.82,1)" font-size="10.5" text-anchor="end" fill="#d2d2d2">T2</text><polygon points="89.5,938 94.7,943 89.5,948" fill="#d06c12"/><text transform="translate(85,959) scale(0.82,1)" font-size="10.5" text-anchor="end" fill="#d2d2d2">T3</text><polygon points="89.5,950 94.7,955 89.5,960" fill="#d06c12"/><text transform="translate(85,971) scale(0.82,1)" font-size="10.5" text-anchor="end" fill="#d2d2d2">Zap</text><polygon points="89.5,962 94.7,967 89.5,972" fill="#d06c12"/><text transform="translate(85,983) scale(0.82,1)" font-size="10.5" text-anchor="end" fill="#d2d2d2">Clv</text><polygon points="89.5,974 94.7,979 89.5,984" fill="#d06c12"/><text transform="translate(85,995) scale(0.82,1)" font-size="10.5" text-anchor="end" fill="#d2d2d2">Cow</text><polygon points="89.5,986 94.7,991 89.5,996" fill="#d06c12"/><text transform="translate(3,898.5) scale(0.82,1)" font-size="10.5" text-anchor="start" fill="#d2d2d2">MIDI</text><polygon points="-4,890 2,895 -4,900" fill="#1a9e9e"/><text x="26" y="899" font-size="11" text-anchor="start" fill="#eeeeee" textLength="34" lengthAdjust="spacingAndGlyphs">EDS16i</text><rect x="276" y="778" width="143" height="32" fill="#2a2c2f" shape-rendering="crispEdges"/><rect x="275" y="777" width="143" height="32" fill="#4a4d51" shape-rendering="crispEdges"/><polygon points="278,782 284,787 278,792" fill="#1a9e9e"/><text transform="translate(285,791) scale(0.82,1)" font-size="10.5" text-anchor="start" fill="#d2d2d2">InL</text><polygon points="278,794 284,799 278,804" fill="#1a9e9e"/><text transform="translate(285,803) scale(0.82,1)" font-size="10.5" text-anchor="start" fill="#d2d2d2">InR</text><text x="307" y="797" font-size="11" text-anchor="start" fill="#eeeeee" textLength="77.6" lengthAdjust="spacingAndGlyphs">SC-RMX160 S X</text><text transform="translate(407,791) scale(0.82,1)" font-size="10.5" text-anchor="end" fill="#d2d2d2">OutL</text><polygon points="410.5,782 415.7,787 410.5,792" fill="#d06c12"/><text transform="translate(407,803) scale(0.82,1)" font-size="10.5" text-anchor="end" fill="#d2d2d2">OutR</text><polygon points="410.5,794 415.7,799 410.5,804" fill="#d06c12"/><rect x="1038" y="394" width="141" height="32" fill="#2a2c2f" shape-rendering="crispEdges"/><rect x="1037" y="393" width="141" height="32" fill="#4a4d51" shape-rendering="crispEdges"/><polygon points="1040,396 1046,401 1040,406" fill="#1a9e9e"/><text transform="translate(1047,405) scale(0.82,1)" font-size="10.5" text-anchor="start" fill="#d2d2d2">InL</text><polygon points="1040,408 1046,413 1040,418" fill="#1a9e9e"/><text transform="translate(1047,417) scale(0.82,1)" font-size="10.5" text-anchor="start" fill="#d2d2d2">InR</text><text x="1069" y="413" font-size="11" text-anchor="start" fill="#eeeeee" textLength="77" lengthAdjust="spacingAndGlyphs">StereoExpander</text><text transform="translate(1168,405) scale(0.82,1)" font-size="10.5" text-anchor="end" fill="#d2d2d2">OutL</text><polygon points="1171.5,396 1176.7,401 1171.5,406" fill="#d06c12"/><text transform="translate(1168,417) scale(0.82,1)" font-size="10.5" text-anchor="end" fill="#d2d2d2">OutR</text><polygon points="1171.5,408 1176.7,413 1171.5,418" fill="#d06c12"/><rect x="1038" y="430" width="135" height="56" fill="#2a2c2f" shape-rendering="crispEdges"/><rect x="1037" y="429" width="135" height="56" fill="#4a4d51" shape-rendering="crispEdges"/><polygon points="1040,434 1046,439 1040,444" fill="#1a9e9e"/><text transform="translate(1047,443) scale(0.82,1)" font-size="10.5" text-anchor="start" fill="#d2d2d2">InL</text><polygon points="1040,446 1046,451 1040,456" fill="#1a9e9e"/><text transform="translate(1047,455) scale(0.82,1)" font-size="10.5" text-anchor="start" fill="#d2d2d2">InR</text><polygon points="1040,458 1046,463 1040,468" fill="#1a9e9e"/><text transform="translate(1047,467) scale(0.82,1)" font-size="10.5" text-anchor="start" fill="#d2d2d2">SCIL</text><polygon points="1040,470 1046,475 1040,480" fill="#1a9e9e"/><text transform="translate(1047,479) scale(0.82,1)" font-size="10.5" text-anchor="start" fill="#d2d2d2">SCIR</text><text x="1072" y="461" font-size="11" text-anchor="start" fill="#eeeeee" textLength="61.7" lengthAdjust="spacingAndGlyphs">Optimaster X</text><text transform="translate(1162,455) scale(0.82,1)" font-size="10.5" text-anchor="end" fill="#d2d2d2">OutL</text><polygon points="1165.5,446 1170.7,451 1165.5,456" fill="#d06c12"/><text transform="translate(1162,467) scale(0.82,1)" font-size="10.5" text-anchor="end" fill="#d2d2d2">OutR</text><polygon points="1165.5,458 1170.7,463 1165.5,468" fill="#d06c12"/><rect x="1278" y="178" width="126" height="296" fill="#2a2c2f" shape-rendering="crispEdges"/><rect x="1277" y="177" width="126" height="296" fill="#4a4d51" shape-rendering="crispEdges"/><polygon points="1280,182 1286,187 1280,192" fill="#1a9e9e"/><text transform="translate(1287,191) scale(0.82,1)" font-size="10.5" text-anchor="start" fill="#d2d2d2">I1</text><text transform="translate(1392,191) scale(0.82,1)" font-size="10.5" text-anchor="end" fill="#d2d2d2">O1</text><polygon points="1395.5,182 1400.7,187 1395.5,192" fill="#d06c12"/><polygon points="1280,194 1286,199 1280,204" fill="#1a9e9e"/><text transform="translate(1287,203) scale(0.82,1)" font-size="10.5" text-anchor="start" fill="#d2d2d2">I2</text><text transform="translate(1392,203) scale(0.82,1)" font-size="10.5" text-anchor="end" fill="#d2d2d2">O2</text><polygon points="1395.5,194 1400.7,199 1395.5,204" fill="#d06c12"/><polygon points="1280,206 1286,211 1280,216" fill="#1a9e9e"/><text transform="translate(1287,215) scale(0.82,1)" font-size="10.5" text-anchor="start" fill="#d2d2d2">I3</text><text transform="translate(1392,215) scale(0.82,1)" font-size="10.5" text-anchor="end" fill="#d2d2d2">O3</text><polygon points="1395.5,206 1400.7,211 1395.5,216" fill="#d06c12"/><polygon points="1280,218 1286,223 1280,228" fill="#1a9e9e"/><text transform="translate(1287,227) scale(0.82,1)" font-size="10.5" text-anchor="start" fill="#d2d2d2">I4</text><text transform="translate(1392,227) scale(0.82,1)" font-size="10.5" text-anchor="end" fill="#d2d2d2">O4</text><polygon points="1395.5,218 1400.7,223 1395.5,228" fill="#d06c12"/><polygon points="1280,230 1286,235 1280,240" fill="#1a9e9e"/><text transform="translate(1287,239) scale(0.82,1)" font-size="10.5" text-anchor="start" fill="#d2d2d2">I5</text><text transform="translate(1392,239) scale(0.82,1)" font-size="10.5" text-anchor="end" fill="#d2d2d2">O5</text><polygon points="1395.5,230 1400.7,235 1395.5,240" fill="#d06c12"/><polygon points="1280,242 1286,247 1280,252" fill="#1a9e9e"/><text transform="translate(1287,251) scale(0.82,1)" font-size="10.5" text-anchor="start" fill="#d2d2d2">I6</text><text transform="translate(1392,251) scale(0.82,1)" font-size="10.5" text-anchor="end" fill="#d2d2d2">O6</text><polygon points="1395.5,242 1400.7,247 1395.5,252" fill="#d06c12"/><polygon points="1280,254 1286,259 1280,264" fill="#1a9e9e"/><text transform="translate(1287,263) scale(0.82,1)" font-size="10.5" text-anchor="start" fill="#d2d2d2">I7</text><text transform="translate(1392,263) scale(0.82,1)" font-size="10.5" text-anchor="end" fill="#d2d2d2">O7</text><polygon points="1395.5,254 1400.7,259 1395.5,264" fill="#d06c12"/><polygon points="1280,266 1286,271 1280,276" fill="#1a9e9e"/><text transform="translate(1287,275) scale(0.82,1)" font-size="10.5" text-anchor="start" fill="#d2d2d2">I8</text><text transform="translate(1392,275) scale(0.82,1)" font-size="10.5" text-anchor="end" fill="#d2d2d2">O8</text><polygon points="1395.5,266 1400.7,271 1395.5,276" fill="#d06c12"/><polygon points="1280,278 1286,283 1280,288" fill="#1a9e9e"/><text transform="translate(1287,287) scale(0.82,1)" font-size="10.5" text-anchor="start" fill="#d2d2d2">I9</text><text transform="translate(1392,287) scale(0.82,1)" font-size="10.5" text-anchor="end" fill="#d2d2d2">O9</text><polygon points="1395.5,278 1400.7,283 1395.5,288" fill="#d06c12"/><polygon points="1280,290 1286,295 1280,300" fill="#1a9e9e"/><text transform="translate(1287,299) scale(0.82,1)" font-size="10.5" text-anchor="start" fill="#d2d2d2">I10</text><text transform="translate(1392,299) scale(0.82,1)" font-size="10.5" text-anchor="end" fill="#d2d2d2">O10</text><polygon points="1395.5,290 1400.7,295 1395.5,300" fill="#d06c12"/><polygon points="1280,302 1286,307 1280,312" fill="#1a9e9e"/><text transform="translate(1287,311) scale(0.82,1)" font-size="10.5" text-anchor="start" fill="#d2d2d2">I11</text><text transform="translate(1392,311) scale(0.82,1)" font-size="10.5" text-anchor="end" fill="#d2d2d2">O11</text><polygon points="1395.5,302 1400.7,307 1395.5,312" fill="#d06c12"/><polygon points="1280,314 1286,319 1280,324" fill="#1a9e9e"/><text transform="translate(1287,323) scale(0.82,1)" font-size="10.5" text-anchor="start" fill="#d2d2d2">I12</text><text transform="translate(1392,323) scale(0.82,1)" font-size="10.5" text-anchor="end" fill="#d2d2d2">O12</text><polygon points="1395.5,314 1400.7,319 1395.5,324" fill="#d06c12"/><polygon points="1280,326 1286,331 1280,336" fill="#1a9e9e"/><text transform="translate(1287,335) scale(0.82,1)" font-size="10.5" text-anchor="start" fill="#d2d2d2">I13</text><text transform="translate(1392,335) scale(0.82,1)" font-size="10.5" text-anchor="end" fill="#d2d2d2">O13</text><polygon points="1395.5,326 1400.7,331 1395.5,336" fill="#d06c12"/><polygon points="1280,338 1286,343 1280,348" fill="#1a9e9e"/><text transform="translate(1287,347) scale(0.82,1)" font-size="10.5" text-anchor="start" fill="#d2d2d2">I14</text><text transform="translate(1392,347) scale(0.82,1)" font-size="10.5" text-anchor="end" fill="#d2d2d2">O14</text><polygon points="1395.5,338 1400.7,343 1395.5,348" fill="#d06c12"/><polygon points="1280,350 1286,355 1280,360" fill="#1a9e9e"/><text transform="translate(1287,359) scale(0.82,1)" font-size="10.5" text-anchor="start" fill="#d2d2d2">I15</text><text transform="translate(1392,359) scale(0.82,1)" font-size="10.5" text-anchor="end" fill="#d2d2d2">O15</text><polygon points="1395.5,350 1400.7,355 1395.5,360" fill="#d06c12"/><polygon points="1280,362 1286,367 1280,372" fill="#1a9e9e"/><text transform="translate(1287,371) scale(0.82,1)" font-size="10.5" text-anchor="start" fill="#d2d2d2">I16</text><text transform="translate(1392,371) scale(0.82,1)" font-size="10.5" text-anchor="end" fill="#d2d2d2">O16</text><polygon points="1395.5,362 1400.7,367 1395.5,372" fill="#d06c12"/><polygon points="1280,374 1286,379 1280,384" fill="#1a9e9e"/><text transform="translate(1287,383) scale(0.82,1)" font-size="10.5" text-anchor="start" fill="#d2d2d2">I17</text><text transform="translate(1392,383) scale(0.82,1)" font-size="10.5" text-anchor="end" fill="#d2d2d2">O17</text><polygon points="1395.5,374 1400.7,379 1395.5,384" fill="#d06c12"/><polygon points="1280,386 1286,391 1280,396" fill="#1a9e9e"/><text transform="translate(1287,395) scale(0.82,1)" font-size="10.5" text-anchor="start" fill="#d2d2d2">I18</text><text transform="translate(1392,395) scale(0.82,1)" font-size="10.5" text-anchor="end" fill="#d2d2d2">O18</text><polygon points="1395.5,386 1400.7,391 1395.5,396" fill="#d06c12"/><polygon points="1280,398 1286,403 1280,408" fill="#1a9e9e"/><text transform="translate(1287,407) scale(0.82,1)" font-size="10.5" text-anchor="start" fill="#d2d2d2">I19</text><text transform="translate(1392,407) scale(0.82,1)" font-size="10.5" text-anchor="end" fill="#d2d2d2">O19</text><polygon points="1395.5,398 1400.7,403 1395.5,408" fill="#d06c12"/><polygon points="1280,410 1286,415 1280,420" fill="#1a9e9e"/><text transform="translate(1287,419) scale(0.82,1)" font-size="10.5" text-anchor="start" fill="#d2d2d2">I20</text><text transform="translate(1392,419) scale(0.82,1)" font-size="10.5" text-anchor="end" fill="#d2d2d2">O20</text><polygon points="1395.5,410 1400.7,415 1395.5,420" fill="#d06c12"/><polygon points="1280,422 1286,427 1280,432" fill="#1a9e9e"/><text transform="translate(1287,431) scale(0.82,1)" font-size="10.5" text-anchor="start" fill="#d2d2d2">I21</text><text transform="translate(1392,431) scale(0.82,1)" font-size="10.5" text-anchor="end" fill="#d2d2d2">O21</text><polygon points="1395.5,422 1400.7,427 1395.5,432" fill="#d06c12"/><polygon points="1280,434 1286,439 1280,444" fill="#1a9e9e"/><text transform="translate(1287,443) scale(0.82,1)" font-size="10.5" text-anchor="start" fill="#d2d2d2">I22</text><text transform="translate(1392,443) scale(0.82,1)" font-size="10.5" text-anchor="end" fill="#d2d2d2">O22</text><polygon points="1395.5,434 1400.7,439 1395.5,444" fill="#d06c12"/><polygon points="1280,446 1286,451 1280,456" fill="#1a9e9e"/><text transform="translate(1287,455) scale(0.82,1)" font-size="10.5" text-anchor="start" fill="#d2d2d2">I23</text><text transform="translate(1392,455) scale(0.82,1)" font-size="10.5" text-anchor="end" fill="#d2d2d2">O23</text><polygon points="1395.5,446 1400.7,451 1395.5,456" fill="#d06c12"/><polygon points="1280,458 1286,463 1280,468" fill="#1a9e9e"/><text transform="translate(1287,467) scale(0.82,1)" font-size="10.5" text-anchor="start" fill="#d2d2d2">I24</text><text transform="translate(1392,467) scale(0.82,1)" font-size="10.5" text-anchor="end" fill="#d2d2d2">O24</text><polygon points="1395.5,458 1400.7,463 1395.5,468" fill="#d06c12"/><text x="1305" y="329" font-size="11" text-anchor="start" fill="#eeeeee" textLength="67" lengthAdjust="spacingAndGlyphs">dNa-Patchbay</text><rect x="1416" y="178" width="123" height="102" fill="#2a2c2f" shape-rendering="crispEdges"/><rect x="1415" y="177" width="123" height="102" fill="#4a4d51" shape-rendering="crispEdges"/><polygon points="1418,182 1424,187 1418,192" fill="#1a9e9e"/><text transform="translate(1425,191) scale(0.82,1)" font-size="10.5" text-anchor="start" fill="#d2d2d2">1</text><polygon points="1418,194 1424,199 1418,204" fill="#1a9e9e"/><text transform="translate(1425,203) scale(0.82,1)" font-size="10.5" text-anchor="start" fill="#d2d2d2">2</text><polygon points="1418,206 1424,211 1418,216" fill="#1a9e9e"/><text transform="translate(1425,215) scale(0.82,1)" font-size="10.5" text-anchor="start" fill="#d2d2d2">3</text><polygon points="1418,218 1424,223 1418,228" fill="#1a9e9e"/><text transform="translate(1425,227) scale(0.82,1)" font-size="10.5" text-anchor="start" fill="#d2d2d2">4</text><polygon points="1418,230 1424,235 1418,240" fill="#1a9e9e"/><text transform="translate(1425,239) scale(0.82,1)" font-size="10.5" text-anchor="start" fill="#d2d2d2">5</text><polygon points="1418,242 1424,247 1418,252" fill="#1a9e9e"/><text transform="translate(1425,251) scale(0.82,1)" font-size="10.5" text-anchor="start" fill="#d2d2d2">6</text><polygon points="1418,254 1424,259 1418,264" fill="#1a9e9e"/><text transform="translate(1425,263) scale(0.82,1)" font-size="10.5" text-anchor="start" fill="#d2d2d2">7</text><polygon points="1418,266 1424,271 1418,276" fill="#1a9e9e"/><text transform="translate(1425,275) scale(0.82,1)" font-size="10.5" text-anchor="start" fill="#d2d2d2">8</text><text x="1434" y="233" font-size="11" text-anchor="start" fill="#eeeeee" textLength="99" lengthAdjust="spacingAndGlyphs">XITE-1  Z-Link A Dest</text><rect x="1416" y="280" width="123" height="102" fill="#2a2c2f" shape-rendering="crispEdges"/><rect x="1415" y="279" width="123" height="102" fill="#4a4d51" shape-rendering="crispEdges"/><polygon points="1418,284 1424,289 1418,294" fill="#1a9e9e"/><text transform="translate(1425,293) scale(0.82,1)" font-size="10.5" text-anchor="start" fill="#d2d2d2">1</text><polygon points="1418,296 1424,301 1418,306" fill="#1a9e9e"/><text transform="translate(1425,305) scale(0.82,1)" font-size="10.5" text-anchor="start" fill="#d2d2d2">2</text><polygon points="1418,308 1424,313 1418,318" fill="#1a9e9e"/><text transform="translate(1425,317) scale(0.82,1)" font-size="10.5" text-anchor="start" fill="#d2d2d2">3</text><polygon points="1418,320 1424,325 1418,330" fill="#1a9e9e"/><text transform="translate(1425,329) scale(0.82,1)" font-size="10.5" text-anchor="start" fill="#d2d2d2">4</text><polygon points="1418,332 1424,337 1418,342" fill="#1a9e9e"/><text transform="translate(1425,341) scale(0.82,1)" font-size="10.5" text-anchor="start" fill="#d2d2d2">5</text><polygon points="1418,344 1424,349 1418,354" fill="#1a9e9e"/><text transform="translate(1425,353) scale(0.82,1)" font-size="10.5" text-anchor="start" fill="#d2d2d2">6</text><polygon points="1418,356 1424,361 1418,366" fill="#1a9e9e"/><text transform="translate(1425,365) scale(0.82,1)" font-size="10.5" text-anchor="start" fill="#d2d2d2">7</text><polygon points="1418,368 1424,373 1418,378" fill="#1a9e9e"/><text transform="translate(1425,377) scale(0.82,1)" font-size="10.5" text-anchor="start" fill="#d2d2d2">8</text><text x="1434" y="335" font-size="11" text-anchor="start" fill="#eeeeee" textLength="99" lengthAdjust="spacingAndGlyphs">XITE-1  Z-Link B Dest</text><rect x="1401" y="510" width="51" height="20" fill="#2a2c2f" shape-rendering="crispEdges"/><rect x="1400" y="509" width="51" height="20" fill="#4a4d51" shape-rendering="crispEdges"/><text x="1446.5" y="522" font-size="9.8" text-anchor="end" fill="#eeeeee">pad</text><rect x="1278" y="484" width="134" height="32" fill="#2a2c2f" shape-rendering="crispEdges"/><rect x="1277" y="483" width="134" height="32" fill="#4a4d51" shape-rendering="crispEdges"/><polygon points="1280,488 1286,493 1280,498" fill="#1a9e9e"/><text transform="translate(1287,497) scale(0.82,1)" font-size="10.5" text-anchor="start" fill="#d2d2d2">In1</text><polygon points="1280,500 1286,505 1280,510" fill="#1a9e9e"/><text transform="translate(1287,509) scale(0.82,1)" font-size="10.5" text-anchor="start" fill="#d2d2d2">In2</text><text x="1308" y="503" font-size="11" text-anchor="start" fill="#eeeeee" textLength="72" lengthAdjust="spacingAndGlyphs">30-ANALYZER</text><text transform="translate(1400,497) scale(0.82,1)" font-size="10.5" text-anchor="end" fill="#d2d2d2">Out1</text><polygon points="1403.5,488 1408.7,493 1403.5,498" fill="#d06c12"/><text transform="translate(1400,509) scale(0.82,1)" font-size="10.5" text-anchor="end" fill="#d2d2d2">Out2</text><polygon points="1403.5,500 1408.7,505 1403.5,510" fill="#d06c12"/><rect x="1284" y="610" width="126" height="126" fill="#2a2c2f" shape-rendering="crispEdges"/><rect x="1283" y="609" width="126" height="126" fill="#4a4d51" shape-rendering="crispEdges"/><polygon points="1328,612 1340,612 1334,617" fill="#1a9e9e"/><text transform="translate(1334,629) scale(0.82,1)" font-size="10.5" text-anchor="middle" fill="#d2d2d2">MIn</text><polygon points="1286,636 1292,641 1286,646" fill="#1a9e9e"/><text transform="translate(1293,645) scale(0.82,1)" font-size="10.5" text-anchor="start" fill="#d2d2d2">IL1</text><polygon points="1286,648 1292,653 1286,658" fill="#1a9e9e"/><text transform="translate(1293,657) scale(0.82,1)" font-size="10.5" text-anchor="start" fill="#d2d2d2">IR1</text><polygon points="1286,660 1292,665 1286,670" fill="#1a9e9e"/><text transform="translate(1293,669) scale(0.82,1)" font-size="10.5" text-anchor="start" fill="#d2d2d2">IL2</text><polygon points="1286,672 1292,677 1286,682" fill="#1a9e9e"/><text transform="translate(1293,681) scale(0.82,1)" font-size="10.5" text-anchor="start" fill="#d2d2d2">IR2</text><polygon points="1286,684 1292,689 1286,694" fill="#1a9e9e"/><text transform="translate(1293,693) scale(0.82,1)" font-size="10.5" text-anchor="start" fill="#d2d2d2">IL3</text><polygon points="1286,696 1292,701 1286,706" fill="#1a9e9e"/><text transform="translate(1293,705) scale(0.82,1)" font-size="10.5" text-anchor="start" fill="#d2d2d2">IR3</text><polygon points="1286,708 1292,713 1286,718" fill="#1a9e9e"/><text transform="translate(1293,717) scale(0.82,1)" font-size="10.5" text-anchor="start" fill="#d2d2d2">IL4</text><polygon points="1286,720 1292,725 1286,730" fill="#1a9e9e"/><text transform="translate(1293,729) scale(0.82,1)" font-size="10.5" text-anchor="start" fill="#d2d2d2">IR4</text><text x="1314" y="646" font-size="11" text-anchor="start" fill="#eeeeee" textLength="62" lengthAdjust="spacingAndGlyphs">MicroMixer X</text><text transform="translate(1398,681) scale(0.82,1)" font-size="10.5" text-anchor="end" fill="#d2d2d2">MixL</text><polygon points="1401.5,672 1406.7,677 1401.5,682" fill="#d06c12"/><text transform="translate(1398,693) scale(0.82,1)" font-size="10.5" text-anchor="end" fill="#d2d2d2">MixR</text><polygon points="1401.5,684 1406.7,689 1401.5,694" fill="#d06c12"/><rect x="1434" y="574" width="117" height="32" fill="#2a2c2f" shape-rendering="crispEdges"/><rect x="1433" y="573" width="117" height="32" fill="#4a4d51" shape-rendering="crispEdges"/><polygon points="1436,578 1442,583 1436,588" fill="#1a9e9e"/><text transform="translate(1443,587) scale(0.82,1)" font-size="10.5" text-anchor="start" fill="#d2d2d2">1L</text><polygon points="1436,590 1442,595 1436,600" fill="#1a9e9e"/><text transform="translate(1443,599) scale(0.82,1)" font-size="10.5" text-anchor="start" fill="#d2d2d2">1R</text><text x="1459" y="593" font-size="11" text-anchor="start" fill="#eeeeee" textLength="86" lengthAdjust="spacingAndGlyphs">ASIO1-32 Dest 24</text><rect x="1434" y="616" width="125" height="103" fill="#2a2c2f" shape-rendering="crispEdges"/><rect x="1433" y="615" width="125" height="103" fill="#4a4d51" shape-rendering="crispEdges"/><polygon points="1436,620 1442,625 1436,630" fill="#1a9e9e"/><text transform="translate(1443,629) scale(0.82,1)" font-size="10.5" text-anchor="start" fill="#d2d2d2">1</text><polygon points="1436,632 1442,637 1436,642" fill="#1a9e9e"/><text transform="translate(1443,641) scale(0.82,1)" font-size="10.5" text-anchor="start" fill="#d2d2d2">2</text><polygon points="1436,644 1442,649 1436,654" fill="#1a9e9e"/><text transform="translate(1443,653) scale(0.82,1)" font-size="10.5" text-anchor="start" fill="#d2d2d2">3</text><polygon points="1436,656 1442,661 1436,666" fill="#1a9e9e"/><text transform="translate(1443,665) scale(0.82,1)" font-size="10.5" text-anchor="start" fill="#d2d2d2">4</text><polygon points="1436,668 1442,673 1436,678" fill="#1a9e9e"/><text transform="translate(1443,677) scale(0.82,1)" font-size="10.5" text-anchor="start" fill="#d2d2d2">5</text><polygon points="1436,680 1442,685 1436,690" fill="#1a9e9e"/><text transform="translate(1443,689) scale(0.82,1)" font-size="10.5" text-anchor="start" fill="#d2d2d2">6</text><polygon points="1436,692 1442,697 1436,702" fill="#1a9e9e"/><text transform="translate(1443,701) scale(0.82,1)" font-size="10.5" text-anchor="start" fill="#d2d2d2">7</text><polygon points="1436,704 1442,709 1436,714" fill="#1a9e9e"/><text transform="translate(1443,713) scale(0.82,1)" font-size="10.5" text-anchor="start" fill="#d2d2d2">8</text><text x="1452" y="671" font-size="11" text-anchor="start" fill="#eeeeee">XITE-1  ADAT A Dest</text><rect x="1434" y="719" width="125" height="103" fill="#2a2c2f" shape-rendering="crispEdges"/><rect x="1433" y="718" width="125" height="103" fill="#4a4d51" shape-rendering="crispEdges"/><polygon points="1436,723 1442,728 1436,733" fill="#1a9e9e"/><text transform="translate(1443,732) scale(0.82,1)" font-size="10.5" text-anchor="start" fill="#d2d2d2">1</text><polygon points="1436,735 1442,740 1436,745" fill="#1a9e9e"/><text transform="translate(1443,744) scale(0.82,1)" font-size="10.5" text-anchor="start" fill="#d2d2d2">2</text><polygon points="1436,747 1442,752 1436,757" fill="#1a9e9e"/><text transform="translate(1443,756) scale(0.82,1)" font-size="10.5" text-anchor="start" fill="#d2d2d2">3</text><polygon points="1436,759 1442,764 1436,769" fill="#1a9e9e"/><text transform="translate(1443,768) scale(0.82,1)" font-size="10.5" text-anchor="start" fill="#d2d2d2">4</text><polygon points="1436,771 1442,776 1436,781" fill="#1a9e9e"/><text transform="translate(1443,780) scale(0.82,1)" font-size="10.5" text-anchor="start" fill="#d2d2d2">5</text><polygon points="1436,783 1442,788 1436,793" fill="#1a9e9e"/><text transform="translate(1443,792) scale(0.82,1)" font-size="10.5" text-anchor="start" fill="#d2d2d2">6</text><polygon points="1436,795 1442,800 1436,805" fill="#1a9e9e"/><text transform="translate(1443,804) scale(0.82,1)" font-size="10.5" text-anchor="start" fill="#d2d2d2">7</text><polygon points="1436,807 1442,812 1436,817" fill="#1a9e9e"/><text transform="translate(1443,816) scale(0.82,1)" font-size="10.5" text-anchor="start" fill="#d2d2d2">8</text><text x="1452" y="774" font-size="11" text-anchor="start" fill="#eeeeee">XITE-1  ADAT B Dest</text>
</g>
<g shape-rendering="crispEdges"><polyline points="0,26 487,26" fill="none" stroke="#4a2d14" stroke-width="4"/><polyline points="0,26 491,26" fill="none" stroke="#bc9170" stroke-width="2"/><polyline points="82,55 319,55" fill="none" stroke="#4a2d14" stroke-width="4"/><polyline points="82,55 323,55" fill="none" stroke="#bc9170" stroke-width="2"/><polyline points="319,67 302,67 302,126 837,126 837,144" fill="none" stroke="#4a2d14" stroke-width="4"/><polyline points="323,67 302,67 302,126 837,126 837,144" fill="none" stroke="#bc9170" stroke-width="2"/><polyline points="0,136 813,136 813,144" fill="none" stroke="#4a2d14" stroke-width="4"/><polyline points="0,136 813,136 813,144" fill="none" stroke="#bc9170" stroke-width="2"/><polyline points="434.5,73 440,73 440,50 487,50" fill="none" stroke="#4a2d14" stroke-width="4"/><polyline points="430.5,73 440,73 440,50 491,50" fill="none" stroke="#bc9170" stroke-width="2"/><polyline points="476.5,116 482,116 482,110 679,110" fill="none" stroke="#4a2d14" stroke-width="4"/><polyline points="472.5,116 482,116 482,110 683,110" fill="none" stroke="#bc9170" stroke-width="2"/><polyline points="713.5,169 719,169 719,173 787,173" fill="none" stroke="#1b3336" stroke-width="4"/><polyline points="709.5,169 719,169 719,173 791,173" fill="none" stroke="#56b4af" stroke-width="2"/><polyline points="713.5,181 728,181 728,185 787,185" fill="none" stroke="#1b3336" stroke-width="4"/><polyline points="709.5,181 728,181 728,185 791,185" fill="none" stroke="#56b4af" stroke-width="2"/><polyline points="356.5,175 362,175 362,181 439,181" fill="none" stroke="#1b3336" stroke-width="4"/><polyline points="352.5,175 362,175 362,181 443,181" fill="none" stroke="#56b4af" stroke-width="2"/><polyline points="356.5,283 361,283 361,277 439,277" fill="none" stroke="#1b3336" stroke-width="4"/><polyline points="352.5,283 361,283 361,277 443,277" fill="none" stroke="#56b4af" stroke-width="2"/><polyline points="356.5,187 372,187 372,193 439,193" fill="none" stroke="#1b3336" stroke-width="4"/><polyline points="352.5,187 372,187 372,193 443,193" fill="none" stroke="#56b4af" stroke-width="2"/><polyline points="356.5,295 371,295 371,289 439,289" fill="none" stroke="#1b3336" stroke-width="4"/><polyline points="352.5,295 371,295 371,289 443,289" fill="none" stroke="#56b4af" stroke-width="2"/><polyline points="356.5,199 382,199 382,205 439,205" fill="none" stroke="#1b3336" stroke-width="4"/><polyline points="352.5,199 382,199 382,205 443,205" fill="none" stroke="#56b4af" stroke-width="2"/><polyline points="356.5,307 381,307 381,301 439,301" fill="none" stroke="#1b3336" stroke-width="4"/><polyline points="352.5,307 381,307 381,301 443,301" fill="none" stroke="#56b4af" stroke-width="2"/><polyline points="356.5,211 392,211 392,217 439,217" fill="none" stroke="#1b3336" stroke-width="4"/><polyline points="352.5,211 392,211 392,217 443,217" fill="none" stroke="#56b4af" stroke-width="2"/><polyline points="356.5,319 391,319 391,313 439,313" fill="none" stroke="#1b3336" stroke-width="4"/><polyline points="352.5,319 391,319 391,313 443,313" fill="none" stroke="#56b4af" stroke-width="2"/><polyline points="356.5,223 402,223 402,229 439,229" fill="none" stroke="#1b3336" stroke-width="4"/><polyline points="352.5,223 402,223 402,229 443,229" fill="none" stroke="#56b4af" stroke-width="2"/><polyline points="356.5,331 401,331 401,325 439,325" fill="none" stroke="#1b3336" stroke-width="4"/><polyline points="352.5,331 401,331 401,325 443,325" fill="none" stroke="#56b4af" stroke-width="2"/><polyline points="356.5,235 412,235 412,241 439,241" fill="none" stroke="#1b3336" stroke-width="4"/><polyline points="352.5,235 412,235 412,241 443,241" fill="none" stroke="#56b4af" stroke-width="2"/><polyline points="356.5,343 411,343 411,337 439,337" fill="none" stroke="#1b3336" stroke-width="4"/><polyline points="352.5,343 411,343 411,337 443,337" fill="none" stroke="#56b4af" stroke-width="2"/><polyline points="356.5,247 422,247 422,253 439,253" fill="none" stroke="#1b3336" stroke-width="4"/><polyline points="352.5,247 422,247 422,253 443,253" fill="none" stroke="#56b4af" stroke-width="2"/><polyline points="356.5,355 421,355 421,349 439,349" fill="none" stroke="#1b3336" stroke-width="4"/><polyline points="352.5,355 421,355 421,349 443,349" fill="none" stroke="#56b4af" stroke-width="2"/><polyline points="356.5,259 432,259 432,265 439,265" fill="none" stroke="#1b3336" stroke-width="4"/><polyline points="352.5,259 432,259 432,265 443,265" fill="none" stroke="#56b4af" stroke-width="2"/><polyline points="356.5,367 431,367 431,361 439,361" fill="none" stroke="#1b3336" stroke-width="4"/><polyline points="352.5,367 431,367 431,361 443,361" fill="none" stroke="#56b4af" stroke-width="2"/><polyline points="30,664 30,674 650,674 650,353 787,353" fill="none" stroke="#1b3336" stroke-width="4"/><polyline points="30,664 30,674 650,674 650,353 791,353" fill="none" stroke="#56b4af" stroke-width="2"/><polyline points="51,664 51,684 640,684 640,365 787,365" fill="none" stroke="#1b3336" stroke-width="4"/><polyline points="51,664 51,684 640,684 640,365 791,365" fill="none" stroke="#56b4af" stroke-width="2"/><polyline points="561.5,229 608,229 608,197 787,197" fill="none" stroke="#1b3336" stroke-width="4"/><polyline points="557.5,229 608,229 608,197 791,197" fill="none" stroke="#56b4af" stroke-width="2"/><polyline points="561.5,241 618,241 618,209 787,209" fill="none" stroke="#1b3336" stroke-width="4"/><polyline points="557.5,241 618,241 618,209 791,209" fill="none" stroke="#56b4af" stroke-width="2"/><polyline points="561.5,253 628,253 628,221 787,221" fill="none" stroke="#1b3336" stroke-width="4"/><polyline points="557.5,253 628,253 628,221 791,221" fill="none" stroke="#56b4af" stroke-width="2"/><polyline points="561.5,265 638,265 638,233 787,233" fill="none" stroke="#1b3336" stroke-width="4"/><polyline points="557.5,265 638,265 638,233 791,233" fill="none" stroke="#56b4af" stroke-width="2"/><polyline points="561.5,277 648,277 648,269 787,269" fill="none" stroke="#1b3336" stroke-width="4"/><polyline points="557.5,277 648,277 648,269 791,269" fill="none" stroke="#56b4af" stroke-width="2"/><polyline points="561.5,289 658,289 658,281 787,281" fill="none" stroke="#1b3336" stroke-width="4"/><polyline points="557.5,289 658,289 658,281 791,281" fill="none" stroke="#56b4af" stroke-width="2"/><polyline points="561.5,301 668,301 668,245 787,245" fill="none" stroke="#1b3336" stroke-width="4"/><polyline points="557.5,301 668,301 668,245 791,245" fill="none" stroke="#56b4af" stroke-width="2"/><polyline points="561.5,313 678,313 678,257 787,257" fill="none" stroke="#1b3336" stroke-width="4"/><polyline points="557.5,313 678,313 678,257 791,257" fill="none" stroke="#56b4af" stroke-width="2"/><polyline points="561.5,325 681,325 681,293 787,293" fill="none" stroke="#1b3336" stroke-width="4"/><polyline points="557.5,325 681,325 681,293 791,293" fill="none" stroke="#56b4af" stroke-width="2"/><polyline points="561.5,337 670,337 670,305 787,305" fill="none" stroke="#1b3336" stroke-width="4"/><polyline points="557.5,337 670,337 670,305 791,305" fill="none" stroke="#56b4af" stroke-width="2"/><polyline points="561.5,349 660,349 660,317 787,317" fill="none" stroke="#1b3336" stroke-width="4"/><polyline points="557.5,349 660,349 660,317 791,317" fill="none" stroke="#56b4af" stroke-width="2"/><polyline points="561.5,181 568,181 568,425 787,425" fill="none" stroke="#1b3336" stroke-width="4"/><polyline points="557.5,181 568,181 568,425 791,425" fill="none" stroke="#56b4af" stroke-width="2"/><polyline points="561.5,193 578,193 578,437 787,437" fill="none" stroke="#1b3336" stroke-width="4"/><polyline points="557.5,193 578,193 578,437 791,437" fill="none" stroke="#56b4af" stroke-width="2"/><polyline points="561.5,205 588,205 588,449 787,449" fill="none" stroke="#1b3336" stroke-width="4"/><polyline points="557.5,205 588,205 588,449 791,449" fill="none" stroke="#56b4af" stroke-width="2"/><polyline points="561.5,217 598,217 598,461 787,461" fill="none" stroke="#1b3336" stroke-width="4"/><polyline points="557.5,217 598,217 598,461 791,461" fill="none" stroke="#56b4af" stroke-width="2"/><polyline points="0,545 787,545" fill="none" stroke="#1b3336" stroke-width="4"/><polyline points="0,545 791,545" fill="none" stroke="#56b4af" stroke-width="2"/><polyline points="0,557 787,557" fill="none" stroke="#1b3336" stroke-width="4"/><polyline points="0,557 791,557" fill="none" stroke="#56b4af" stroke-width="2"/><polyline points="0,569 787,569" fill="none" stroke="#1b3336" stroke-width="4"/><polyline points="0,569 791,569" fill="none" stroke="#56b4af" stroke-width="2"/><polyline points="0,581 787,581" fill="none" stroke="#1b3336" stroke-width="4"/><polyline points="0,581 791,581" fill="none" stroke="#56b4af" stroke-width="2"/><polyline points="0,593 787,593" fill="none" stroke="#1b3336" stroke-width="4"/><polyline points="0,593 791,593" fill="none" stroke="#56b4af" stroke-width="2"/><polyline points="0,605 787,605" fill="none" stroke="#1b3336" stroke-width="4"/><polyline points="0,605 791,605" fill="none" stroke="#56b4af" stroke-width="2"/><polyline points="580.5,715 586,715 586,377 787,377" fill="none" stroke="#1b3336" stroke-width="4"/><polyline points="576.5,715 586,715 586,377 791,377" fill="none" stroke="#56b4af" stroke-width="2"/><polyline points="580.5,727 596,727 596,389 787,389" fill="none" stroke="#1b3336" stroke-width="4"/><polyline points="576.5,727 596,727 596,389 791,389" fill="none" stroke="#56b4af" stroke-width="2"/><polyline points="584.5,791 591,791 591,401 787,401" fill="none" stroke="#1b3336" stroke-width="4"/><polyline points="580.5,791 591,791 591,401 791,401" fill="none" stroke="#56b4af" stroke-width="2"/><polyline points="584.5,803 601,803 601,413 787,413" fill="none" stroke="#1b3336" stroke-width="4"/><polyline points="580.5,803 601,803 601,413 791,413" fill="none" stroke="#56b4af" stroke-width="2"/><polyline points="93.5,726 100,726 100,721 121,721" fill="none" stroke="#1b3336" stroke-width="4"/><polyline points="89.5,726 100,726 100,721 125,721" fill="none" stroke="#56b4af" stroke-width="2"/><polyline points="100,726 100,733 121,733" fill="none" stroke="#1b3336" stroke-width="4"/><polyline points="100,726 100,733 125,733" fill="none" stroke="#56b4af" stroke-width="2"/><polyline points="262.5,721 268,721 268,719 283,719" fill="none" stroke="#1b3336" stroke-width="4"/><polyline points="258.5,721 268,721 268,719 287,719" fill="none" stroke="#56b4af" stroke-width="2"/><polyline points="262.5,733 278,733 278,731 283,731" fill="none" stroke="#1b3336" stroke-width="4"/><polyline points="258.5,733 278,733 278,731 287,731" fill="none" stroke="#56b4af" stroke-width="2"/><polyline points="428.5,719 436,719 436,715 451,715" fill="none" stroke="#1b3336" stroke-width="4"/><polyline points="424.5,719 436,719 436,715 455,715" fill="none" stroke="#56b4af" stroke-width="2"/><polyline points="428.5,731 445,731 445,727 451,727" fill="none" stroke="#1b3336" stroke-width="4"/><polyline points="424.5,731 445,731 445,727 455,727" fill="none" stroke="#56b4af" stroke-width="2"/><polyline points="95.5,787 101,787 101,791 115,791" fill="none" stroke="#1b3336" stroke-width="4"/><polyline points="91.5,787 101,787 101,791 119,791" fill="none" stroke="#56b4af" stroke-width="2"/><polyline points="95.5,799 111,799 111,803 115,803" fill="none" stroke="#1b3336" stroke-width="4"/><polyline points="91.5,799 111,799 111,803 119,803" fill="none" stroke="#56b4af" stroke-width="2"/><polyline points="260.5,791 268,791 268,787 277,787" fill="none" stroke="#1b3336" stroke-width="4"/><polyline points="256.5,791 268,791 268,787 281,787" fill="none" stroke="#56b4af" stroke-width="2"/><polyline points="260.5,803 268,803 268,799 277,799" fill="none" stroke="#1b3336" stroke-width="4"/><polyline points="256.5,803 268,803 268,799 281,799" fill="none" stroke="#56b4af" stroke-width="2"/><polyline points="416.5,787 427,787 427,791 439,791" fill="none" stroke="#1b3336" stroke-width="4"/><polyline points="412.5,787 427,787 427,791 443,791" fill="none" stroke="#56b4af" stroke-width="2"/><polyline points="416.5,799 434,799 434,803 439,803" fill="none" stroke="#1b3336" stroke-width="4"/><polyline points="412.5,799 434,799 434,803 443,803" fill="none" stroke="#56b4af" stroke-width="2"/><polyline points="397,999 397,473 787,473" fill="none" stroke="#1b3336" stroke-width="4"/><polyline points="397,999 397,473 791,473" fill="none" stroke="#56b4af" stroke-width="2"/><polyline points="407,999 407,485 787,485" fill="none" stroke="#1b3336" stroke-width="4"/><polyline points="407,999 407,485 791,485" fill="none" stroke="#56b4af" stroke-width="2"/><polyline points="412,999 412,497 787,497" fill="none" stroke="#1b3336" stroke-width="4"/><polyline points="412,999 412,497 791,497" fill="none" stroke="#56b4af" stroke-width="2"/><polyline points="422,999 422,509 787,509" fill="none" stroke="#1b3336" stroke-width="4"/><polyline points="422,999 422,509 791,509" fill="none" stroke="#56b4af" stroke-width="2"/><polyline points="425,999 425,521 787,521" fill="none" stroke="#1b3336" stroke-width="4"/><polyline points="425,999 425,521 791,521" fill="none" stroke="#56b4af" stroke-width="2"/><polyline points="435,999 435,533 787,533" fill="none" stroke="#1b3336" stroke-width="4"/><polyline points="435,999 435,533 791,533" fill="none" stroke="#56b4af" stroke-width="2"/><polyline points="801,862 801,870 1272,870 1272,187 1279,187" fill="none" stroke="#1b3336" stroke-width="4"/><polyline points="801,862 801,870 1272,870 1272,187 1283,187" fill="none" stroke="#56b4af" stroke-width="2"/><polyline points="825,862 825,880 1262,880 1262,199 1279,199" fill="none" stroke="#1b3336" stroke-width="4"/><polyline points="825,862 825,880 1262,880 1262,199 1283,199" fill="none" stroke="#56b4af" stroke-width="2"/><polyline points="849,862 849,890 1252,890 1252,211 1279,211" fill="none" stroke="#1b3336" stroke-width="4"/><polyline points="849,862 849,890 1252,890 1252,211 1283,211" fill="none" stroke="#56b4af" stroke-width="2"/><polyline points="873,862 873,900 1242,900 1242,223 1279,223" fill="none" stroke="#1b3336" stroke-width="4"/><polyline points="873,862 873,900 1242,900 1242,223 1283,223" fill="none" stroke="#56b4af" stroke-width="2"/><polyline points="983.5,425 990,425 990,403 1175,403" fill="none" stroke="#1b3336" stroke-width="4"/><polyline points="979.5,425 990,425 990,403 1175,403" fill="none" stroke="#56b4af" stroke-width="2"/><polyline points="1032,403 1032,439 1039,439" fill="none" stroke="#1b3336" stroke-width="4"/><polyline points="1032,403 1032,439 1043,439" fill="none" stroke="#56b4af" stroke-width="2"/><polyline points="983.5,437 1000,437 1000,415 1175,415" fill="none" stroke="#1b3336" stroke-width="4"/><polyline points="979.5,437 1000,437 1000,415 1175,415" fill="none" stroke="#56b4af" stroke-width="2"/><polyline points="1022,415 1022,451 1039,451" fill="none" stroke="#1b3336" stroke-width="4"/><polyline points="1022,415 1022,451 1043,451" fill="none" stroke="#56b4af" stroke-width="2"/><polyline points="983.5,449 1010,449 1010,665 1285,665" fill="none" stroke="#1b3336" stroke-width="4"/><polyline points="979.5,449 1010,449 1010,665 1289,665" fill="none" stroke="#56b4af" stroke-width="2"/><polyline points="983.5,461 1020,461 1020,677 1285,677" fill="none" stroke="#1b3336" stroke-width="4"/><polyline points="979.5,461 1020,461 1020,677 1289,677" fill="none" stroke="#56b4af" stroke-width="2"/><polyline points="983.5,473 1030,473 1030,689 1285,689" fill="none" stroke="#1b3336" stroke-width="4"/><polyline points="979.5,473 1030,473 1030,689 1289,689" fill="none" stroke="#56b4af" stroke-width="2"/><polyline points="983.5,485 1040,485 1040,701 1285,701" fill="none" stroke="#1b3336" stroke-width="4"/><polyline points="979.5,485 1040,485 1040,701 1289,701" fill="none" stroke="#56b4af" stroke-width="2"/><polyline points="1171.5,451 1177,451" fill="none" stroke="#1b3336" stroke-width="4"/><polyline points="1167.5,451 1177,451" fill="none" stroke="#56b4af" stroke-width="2"/><polyline points="1279,235 1177,235 1177,641 1285,641" fill="none" stroke="#1b3336" stroke-width="4"/><polyline points="1283,235 1177,235 1177,641 1289,641" fill="none" stroke="#56b4af" stroke-width="2"/><polyline points="1177,493 1279,493" fill="none" stroke="#1b3336" stroke-width="4"/><polyline points="1177,493 1283,493" fill="none" stroke="#56b4af" stroke-width="2"/><polyline points="1171.5,463 1187,463" fill="none" stroke="#1b3336" stroke-width="4"/><polyline points="1167.5,463 1187,463" fill="none" stroke="#56b4af" stroke-width="2"/><polyline points="1279,247 1187,247 1187,653 1285,653" fill="none" stroke="#1b3336" stroke-width="4"/><polyline points="1283,247 1187,247 1187,653 1289,653" fill="none" stroke="#56b4af" stroke-width="2"/><polyline points="1187,505 1279,505" fill="none" stroke="#1b3336" stroke-width="4"/><polyline points="1187,505 1283,505" fill="none" stroke="#56b4af" stroke-width="2"/><polyline points="1401.5,187 1417,187" fill="none" stroke="#1b3336" stroke-width="4"/><polyline points="1397.5,187 1421,187" fill="none" stroke="#56b4af" stroke-width="2"/><polyline points="1401.5,283 1409,283 1409,289 1417,289" fill="none" stroke="#1b3336" stroke-width="4"/><polyline points="1397.5,283 1409,283 1409,289 1421,289" fill="none" stroke="#56b4af" stroke-width="2"/><polyline points="1401.5,199 1417,199" fill="none" stroke="#1b3336" stroke-width="4"/><polyline points="1397.5,199 1421,199" fill="none" stroke="#56b4af" stroke-width="2"/><polyline points="1401.5,295 1409,295 1409,301 1417,301" fill="none" stroke="#1b3336" stroke-width="4"/><polyline points="1397.5,295 1409,295 1409,301 1421,301" fill="none" stroke="#56b4af" stroke-width="2"/><polyline points="1401.5,211 1417,211" fill="none" stroke="#1b3336" stroke-width="4"/><polyline points="1397.5,211 1421,211" fill="none" stroke="#56b4af" stroke-width="2"/><polyline points="1401.5,307 1409,307 1409,313 1417,313" fill="none" stroke="#1b3336" stroke-width="4"/><polyline points="1397.5,307 1409,307 1409,313 1421,313" fill="none" stroke="#56b4af" stroke-width="2"/><polyline points="1401.5,223 1417,223" fill="none" stroke="#1b3336" stroke-width="4"/><polyline points="1397.5,223 1421,223" fill="none" stroke="#56b4af" stroke-width="2"/><polyline points="1401.5,319 1409,319 1409,325 1417,325" fill="none" stroke="#1b3336" stroke-width="4"/><polyline points="1397.5,319 1409,319 1409,325 1421,325" fill="none" stroke="#56b4af" stroke-width="2"/><polyline points="1401.5,235 1417,235" fill="none" stroke="#1b3336" stroke-width="4"/><polyline points="1397.5,235 1421,235" fill="none" stroke="#56b4af" stroke-width="2"/><polyline points="1401.5,331 1409,331 1409,337 1417,337" fill="none" stroke="#1b3336" stroke-width="4"/><polyline points="1397.5,331 1409,331 1409,337 1421,337" fill="none" stroke="#56b4af" stroke-width="2"/><polyline points="1401.5,247 1417,247" fill="none" stroke="#1b3336" stroke-width="4"/><polyline points="1397.5,247 1421,247" fill="none" stroke="#56b4af" stroke-width="2"/><polyline points="1401.5,343 1409,343 1409,349 1417,349" fill="none" stroke="#1b3336" stroke-width="4"/><polyline points="1397.5,343 1409,343 1409,349 1421,349" fill="none" stroke="#56b4af" stroke-width="2"/><polyline points="1401.5,259 1417,259" fill="none" stroke="#1b3336" stroke-width="4"/><polyline points="1397.5,259 1421,259" fill="none" stroke="#56b4af" stroke-width="2"/><polyline points="1401.5,355 1409,355 1409,361 1417,361" fill="none" stroke="#1b3336" stroke-width="4"/><polyline points="1397.5,355 1409,355 1409,361 1421,361" fill="none" stroke="#56b4af" stroke-width="2"/><polyline points="1401.5,271 1417,271" fill="none" stroke="#1b3336" stroke-width="4"/><polyline points="1397.5,271 1421,271" fill="none" stroke="#56b4af" stroke-width="2"/><polyline points="1401.5,367 1409,367 1409,373 1417,373" fill="none" stroke="#1b3336" stroke-width="4"/><polyline points="1397.5,367 1409,367 1409,373 1421,373" fill="none" stroke="#56b4af" stroke-width="2"/><polyline points="1407.5,677 1414,677" fill="none" stroke="#1b3336" stroke-width="4"/><polyline points="1403.5,677 1414,677" fill="none" stroke="#56b4af" stroke-width="2"/><polyline points="1435,583 1414,583 1414,799 1436,799" fill="none" stroke="#1b3336" stroke-width="4"/><polyline points="1439,583 1414,583 1414,799 1436,799" fill="none" stroke="#56b4af" stroke-width="2"/><polyline points="1414,625 1435,625" fill="none" stroke="#1b3336" stroke-width="4"/><polyline points="1414,625 1439,625" fill="none" stroke="#56b4af" stroke-width="2"/><polyline points="1414,649 1435,649" fill="none" stroke="#1b3336" stroke-width="4"/><polyline points="1414,649 1439,649" fill="none" stroke="#56b4af" stroke-width="2"/><polyline points="1414,673 1435,673" fill="none" stroke="#1b3336" stroke-width="4"/><polyline points="1414,673 1439,673" fill="none" stroke="#56b4af" stroke-width="2"/><polyline points="1414,697 1435,697" fill="none" stroke="#1b3336" stroke-width="4"/><polyline points="1414,697 1439,697" fill="none" stroke="#56b4af" stroke-width="2"/><polyline points="1414,727 1436,727" fill="none" stroke="#1b3336" stroke-width="4"/><polyline points="1414,727 1436,727" fill="none" stroke="#56b4af" stroke-width="2"/><polyline points="1414,751 1436,751" fill="none" stroke="#1b3336" stroke-width="4"/><polyline points="1414,751 1436,751" fill="none" stroke="#56b4af" stroke-width="2"/><polyline points="1414,775 1436,775" fill="none" stroke="#1b3336" stroke-width="4"/><polyline points="1414,775 1436,775" fill="none" stroke="#56b4af" stroke-width="2"/><polyline points="1407.5,689 1424,689" fill="none" stroke="#1b3336" stroke-width="4"/><polyline points="1403.5,689 1424,689" fill="none" stroke="#56b4af" stroke-width="2"/><polyline points="1435,595 1424,595 1424,811 1436,811" fill="none" stroke="#1b3336" stroke-width="4"/><polyline points="1439,595 1424,595 1424,811 1436,811" fill="none" stroke="#56b4af" stroke-width="2"/><polyline points="1424,637 1435,637" fill="none" stroke="#1b3336" stroke-width="4"/><polyline points="1424,637 1439,637" fill="none" stroke="#56b4af" stroke-width="2"/><polyline points="1424,661 1435,661" fill="none" stroke="#1b3336" stroke-width="4"/><polyline points="1424,661 1439,661" fill="none" stroke="#56b4af" stroke-width="2"/><polyline points="1424,685 1435,685" fill="none" stroke="#1b3336" stroke-width="4"/><polyline points="1424,685 1439,685" fill="none" stroke="#56b4af" stroke-width="2"/><polyline points="1424,709 1435,709" fill="none" stroke="#1b3336" stroke-width="4"/><polyline points="1424,709 1439,709" fill="none" stroke="#56b4af" stroke-width="2"/><polyline points="1424,739 1436,739" fill="none" stroke="#1b3336" stroke-width="4"/><polyline points="1424,739 1436,739" fill="none" stroke="#56b4af" stroke-width="2"/><polyline points="1424,763 1436,763" fill="none" stroke="#1b3336" stroke-width="4"/><polyline points="1424,763 1436,763" fill="none" stroke="#56b4af" stroke-width="2"/><polyline points="1424,787 1436,787" fill="none" stroke="#1b3336" stroke-width="4"/><polyline points="1424,787 1436,787" fill="none" stroke="#56b4af" stroke-width="2"/></g>
<g></g>
<ellipse cx="1447.5" cy="729" rx="102" ry="225.5" fill="none" stroke="#fd3341" stroke-width="22.5"/>
<rect x="0" y="1002" width="1556" height="5" fill="#1c1f21"/><rect x="1554" y="8" width="2" height="994" fill="#303336"/>
</svg>
</body></html>
